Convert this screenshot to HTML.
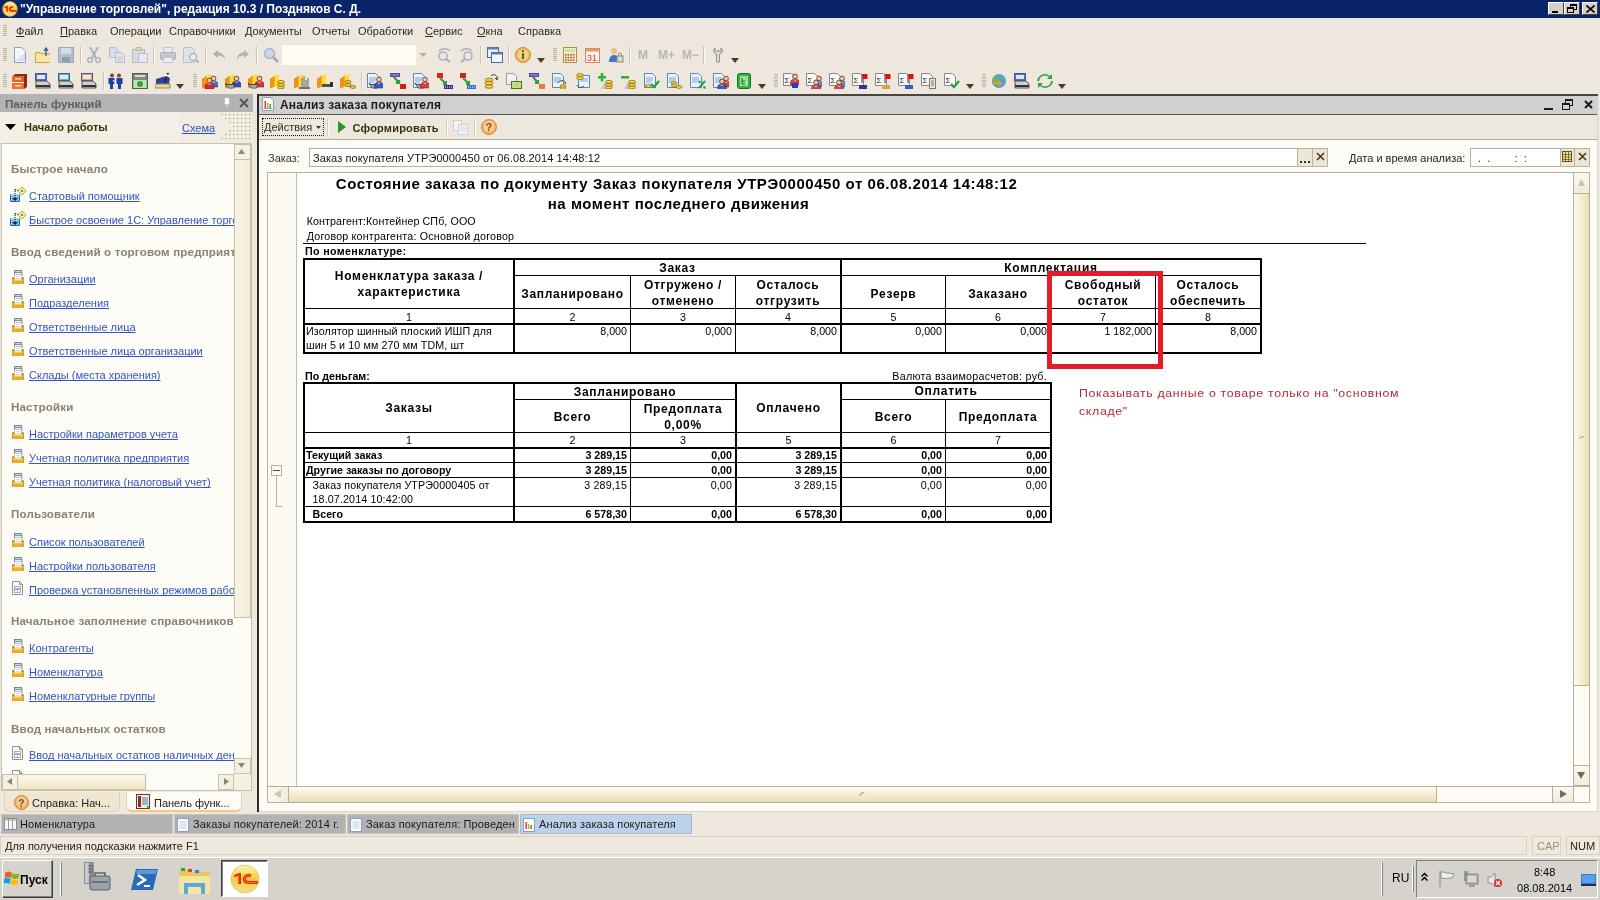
<!DOCTYPE html>
<html><head><meta charset="utf-8">
<style>
*{box-sizing:border-box;}
html,body{margin:0;padding:0;}
body{width:1600px;height:900px;position:relative;overflow:hidden;background:#eee7de;font-family:"Liberation Sans",sans-serif;font-size:11px;color:#000;}
.a{position:absolute;}
.t{position:absolute;white-space:nowrap;line-height:1;}
.grip{position:absolute;width:4px;background:repeating-linear-gradient(to bottom,#b9b29c 0 1px,transparent 1px 2px);}
.sep{position:absolute;width:1px;background:#d8d0bf;border-right:1px solid #fff;}
.ico{position:absolute;width:16px;height:16px;}
.lnk{color:#2646c8;text-decoration:underline;}
u,.t{text-decoration-skip-ink:none;}
.sec{color:#8a826f;font-weight:bold;}
</style></head>
<body><div id="wrap" style="position:absolute;left:0;top:0;width:1600px;height:900px;will-change:transform;">
<!-- TITLE BAR -->
<div class="a" style="left:0;top:0;width:1600px;height:18px;background:#0a246a;"></div>
<svg class="a" style="left:2px;top:1px" width="16" height="16" viewBox="0 0 30 30"><defs><linearGradient id="g1t" x1="0" y1="0" x2="0" y2="1"><stop offset="0" stop-color="#fdf2b0"/><stop offset="0.5" stop-color="#f5cf3a"/><stop offset="1" stop-color="#f6dc90"/></linearGradient></defs><circle cx="15" cy="15" r="14" fill="url(#g1t)" stroke="#c09030" stroke-width="1.2"/><path d="M4 11l5-2h2v11H8v-8l-4 1z" fill="#e8280a"/><path d="M21 12a4.2 3.6 0 1 0 -3 6.5H28" stroke="#e8280a" stroke-width="3.4" fill="none"/></svg>
<div class="t" style="left:20px;top:3px;color:#fff;font-weight:bold;font-size:12px;">"Управление торговлей", редакция 10.3 / Поздняков С. Д.</div>
<!-- title buttons -->
<div class="a" style="left:1548px;top:2px;width:16px;height:13px;background:#d4d0c8;border:1px solid;border-color:#fff #404040 #404040 #fff;"><div class="a" style="left:3px;top:8px;width:6px;height:2px;background:#000"></div></div>
<div class="a" style="left:1564px;top:2px;width:16px;height:13px;background:#d4d0c8;border:1px solid;border-color:#fff #404040 #404040 #fff;"><div class="a" style="left:5px;top:1px;width:7px;height:6px;border:1px solid #000;border-top-width:2px"></div><div class="a" style="left:2px;top:4px;width:7px;height:6px;border:1px solid #000;border-top-width:2px;background:#d4d0c8"></div></div>
<div class="a" style="left:1582px;top:2px;width:16px;height:13px;background:#d4d0c8;border:1px solid;border-color:#fff #404040 #404040 #fff;"><svg class="a" style="left:3px;top:2px" width="9" height="8"><path d="M0.5 0.5L8.5 7.5M8.5 0.5L0.5 7.5" stroke="#000" stroke-width="1.6"/></svg></div>

<!-- MENU BAR -->
<div class="grip" style="left:3px;top:25px;height:11px;"></div>
<div id="menu">
<div class="t" style="left:16px;top:26px;color:#2b2b1c;"><u>Ф</u>айл</div>
<div class="t" style="left:60px;top:26px;color:#2b2b1c;"><u>П</u>равка</div>
<div class="t" style="left:110px;top:26px;color:#2b2b1c;">Операции</div>
<div class="t" style="left:169px;top:26px;color:#2b2b1c;">Справочники</div>
<div class="t" style="left:245px;top:26px;color:#2b2b1c;">Документы</div>
<div class="t" style="left:312px;top:26px;color:#2b2b1c;">Отчеты</div>
<div class="t" style="left:358px;top:26px;color:#2b2b1c;">Обработки</div>
<div class="t" style="left:425px;top:26px;color:#2b2b1c;"><u>С</u>ервис</div>
<div class="t" style="left:477px;top:26px;color:#2b2b1c;"><u>О</u>кна</div>
<div class="t" style="left:518px;top:26px;color:#2b2b1c;">Справка</div>
</div>

<!-- TOOLBAR 1 -->
<div class="grip" style="left:3px;top:48px;height:13px;"></div><svg class="a" style="left:12px;top:47px;" width="16" height="16" viewBox="0 0 16 16"><path d="M2.5 0.5h7l4 4v11h-11z" fill="#f4f8fd" stroke="#8ea0b8"/><path d="M3 14h10V6z" fill="#d5e2f2"/></svg><svg class="a" style="left:35px;top:47px;" width="16" height="16" viewBox="0 0 16 16"><path d="M0.5 5.5h5l1 1h8v9h-14z" fill="#f6dc83" stroke="#c9a24a"/><path d="M1 8h14v7H1z" fill="#f8e7a6"/><path d="M11 2v7M9 4l2-3 2 3" stroke="#2d5a94" stroke-width="1.3" fill="none"/></svg><svg class="a" style="left:58px;top:47px;" width="16" height="16" viewBox="0 0 16 16"><rect x="0.5" y="0.5" width="15" height="15" fill="#b2bfcc" stroke="#9aa8b8"/><rect x="3" y="1" width="10" height="6" fill="#d6dde6"/><rect x="4" y="10" width="8" height="5" fill="#8e9cad"/></svg><div class="a" style="left:80px;top:46px;width:1px;height:18px;background:#cdc5b4;"></div><div class="a" style="left:81px;top:46px;width:1px;height:18px;background:#fbf9f5;"></div><svg class="a" style="left:86px;top:47px;" width="16" height="16" viewBox="0 0 16 16"><path d="M4 0l6 11M12 0L6 11" stroke="#a6b1bf" stroke-width="2"/><circle cx="4" cy="13" r="2.3" fill="none" stroke="#a6b1bf" stroke-width="1.5"/><circle cx="12" cy="13" r="2.3" fill="none" stroke="#a6b1bf" stroke-width="1.5"/></svg><svg class="a" style="left:109px;top:47px;" width="16" height="16" viewBox="0 0 16 16"><path d="M0.5 0.5h6l2 2v8h-8z" fill="#d8dee8" stroke="#b6c0cc"/><path d="M6.5 5.5h6l3 3v7h-9z" fill="#dfe5ee" stroke="#b6c0cc"/><path d="M8 10h6M8 12h6M8 14h6" stroke="#c0c9d6"/></svg><svg class="a" style="left:132px;top:47px;" width="16" height="16" viewBox="0 0 16 16"><rect x="0.5" y="2.5" width="12" height="13" fill="#d5dbe3" stroke="#b3bcc8"/><rect x="4" y="0.5" width="5" height="3" fill="#e6d9b8" stroke="#c4b690"/><path d="M6.5 6.5h9v9h-9z" fill="#e4e9f0" stroke="#b6c0cc"/></svg><div class="a" style="left:153px;top:46px;width:1px;height:18px;background:#cdc5b4;"></div><div class="a" style="left:154px;top:46px;width:1px;height:18px;background:#fbf9f5;"></div><svg class="a" style="left:160px;top:47px;" width="16" height="16" viewBox="0 0 16 16"><rect x="3.5" y="0.5" width="9" height="5" fill="#e5e8ec" stroke="#bfc5cc"/><rect x="0.5" y="5.5" width="15" height="7" rx="1" fill="#c4c8cd" stroke="#a9aeb5"/><rect x="3.5" y="10.5" width="9" height="5" fill="#eceef0" stroke="#bfc5cc"/></svg><svg class="a" style="left:183px;top:47px;" width="16" height="16" viewBox="0 0 16 16"><path d="M0.5 0.5h8l3 3v12h-11z" fill="#dde3eb" stroke="#b8c1cd"/><circle cx="10" cy="10" r="3.5" fill="#e8edf3" stroke="#a8b2be" stroke-width="1.3"/><path d="M12.5 12.5l3 3" stroke="#a8b2be" stroke-width="2"/></svg><div class="a" style="left:205px;top:46px;width:1px;height:18px;background:#cdc5b4;"></div><div class="a" style="left:206px;top:46px;width:1px;height:18px;background:#fbf9f5;"></div><svg class="a" style="left:212px;top:47px;" width="16" height="16" viewBox="0 0 16 16"><path d="M6 3L1 7l5 4V8.5c4 0 6 1.5 7 4.5c0-5-3-7.5-7-7.5z" fill="#a9b3a9"/></svg><svg class="a" style="left:234px;top:47px;" width="16" height="16" viewBox="0 0 16 16"><path d="M10 3l5 4-5 4V8.5c-4 0-6 1.5-7 4.5c0-5 3-7.5 7-7.5z" fill="#a9b7a9"/></svg><div class="a" style="left:256px;top:46px;width:1px;height:18px;background:#cdc5b4;"></div><div class="a" style="left:257px;top:46px;width:1px;height:18px;background:#fbf9f5;"></div><svg class="a" style="left:263px;top:47px;" width="16" height="16" viewBox="0 0 16 16"><circle cx="6.5" cy="6.5" r="5" fill="#c8d6ea" stroke="#a9b6c6" stroke-width="1.5"/><path d="M10 10l5 5" stroke="#a6a9ae" stroke-width="2.5"/></svg><div class="a" style="left:282px;top:45px;width:134px;height:20px;background:#fdfbf3;"></div><div class="a" style="left:416px;top:45px;width:15px;height:20px;background:#efe9dc;border:1px solid #f5e9c0;border-left:none"></div><svg class="a" style="left:419px;top:53px" width="8" height="5"><path d="M0 0h8L4 4z" fill="#b8b0a0"/></svg><svg class="a" style="left:436px;top:47px;" width="16" height="16" viewBox="0 0 16 16"><g><circle cx="7" cy="9" r="4" fill="none" stroke="#a9b3bf" stroke-width="1.6"/><path d="M10 12l4 3" stroke="#a9aeb5" stroke-width="2"/><path d="M3 4c3-3 8-3 11 0" stroke="#a9b3bf" stroke-width="1.5" fill="none"/></g></svg><svg class="a" style="left:459px;top:47px;" width="16" height="16" viewBox="0 0 16 16"><g transform="translate(16,0) scale(-1,1)"><circle cx="7" cy="9" r="4" fill="none" stroke="#a9b3bf" stroke-width="1.6"/><path d="M10 12l4 3" stroke="#a9aeb5" stroke-width="2"/><path d="M3 4c3-3 8-3 11 0" stroke="#a9b3bf" stroke-width="1.5" fill="none"/></g></svg><div class="a" style="left:480px;top:46px;width:1px;height:18px;background:#cdc5b4;"></div><div class="a" style="left:481px;top:46px;width:1px;height:18px;background:#fbf9f5;"></div><svg class="a" style="left:487px;top:47px;" width="16" height="16" viewBox="0 0 16 16"><rect x="0.5" y="0.5" width="11" height="10" fill="#e8eef6" stroke="#4a6b96"/><rect x="0.5" y="0.5" width="11" height="2" fill="#5b7fb0"/><rect x="4.5" y="5.5" width="11" height="10" fill="#f2f5fa" stroke="#4a6b96"/><rect x="4.5" y="5.5" width="11" height="2" fill="#5b7fb0"/></svg><div class="a" style="left:508px;top:46px;width:1px;height:18px;background:#cdc5b4;"></div><div class="a" style="left:509px;top:46px;width:1px;height:18px;background:#fbf9f5;"></div><svg class="a" style="left:515px;top:47px;" width="16" height="16" viewBox="0 0 16 16"><circle cx="8" cy="8" r="7.5" fill="#f0b85a" stroke="#c98a30"/><circle cx="8" cy="8" r="5.5" fill="#f6cf84"/><rect x="7" y="6" width="2" height="6" fill="#3c7a1e"/><rect x="7" y="3" width="2" height="2" fill="#3c7a1e"/></svg><svg class="a" style="left:537px;top:58px;" width="8" height="5" viewBox="0 0 8 5"><path d="M0 0h8L4 5z" fill="#4a3e1c"/></svg><div class="grip" style="left:553px;top:48px;height:13px;"></div><svg class="a" style="left:562px;top:47px;" width="16" height="16" viewBox="0 0 16 16"><rect x="1.5" y="0.5" width="13" height="15" fill="#f5e9c8" stroke="#b58d3c"/><rect x="3" y="2" width="10" height="3" fill="#cde3a9"/><rect x="3.0" y="7.0" width="1.6" height="1.6" fill="#a06020"/><rect x="5.6" y="7.0" width="1.6" height="1.6" fill="#a06020"/><rect x="8.2" y="7.0" width="1.6" height="1.6" fill="#a06020"/><rect x="10.8" y="7.0" width="1.6" height="1.6" fill="#a06020"/><rect x="3.0" y="9.7" width="1.6" height="1.6" fill="#a06020"/><rect x="5.6" y="9.7" width="1.6" height="1.6" fill="#a06020"/><rect x="8.2" y="9.7" width="1.6" height="1.6" fill="#a06020"/><rect x="10.8" y="9.7" width="1.6" height="1.6" fill="#a06020"/><rect x="3.0" y="12.4" width="1.6" height="1.6" fill="#a06020"/><rect x="5.6" y="12.4" width="1.6" height="1.6" fill="#a06020"/><rect x="8.2" y="12.4" width="1.6" height="1.6" fill="#a06020"/><rect x="10.8" y="12.4" width="1.6" height="1.6" fill="#a06020"/></svg><svg class="a" style="left:585px;top:47px;" width="16" height="16" viewBox="0 0 16 16"><rect x="0.5" y="1.5" width="14" height="14" fill="#fbf3e6" stroke="#c78a5a"/><rect x="0.5" y="1.5" width="14" height="3" fill="#e39a6a"/><text x="2" y="14" font-size="9" font-family="Liberation Sans" fill="#d04020">31</text></svg><svg class="a" style="left:608px;top:47px;" width="16" height="16" viewBox="0 0 16 16"><circle cx="6" cy="4" r="3" fill="#f2b98a"/><path d="M1 15c0-5 2-7 5-7s5 2 5 7z" fill="#3f78c8"/><rect x="9" y="9" width="6" height="6" fill="#e0d8c0" stroke="#8a8a80"/><path d="M10.5 9V7.5a1.5 1.5 0 013 0V9" stroke="#8a8a80" fill="none"/></svg><div class="a" style="left:629px;top:46px;width:1px;height:18px;background:#cdc5b4;"></div><div class="a" style="left:630px;top:46px;width:1px;height:18px;background:#fbf9f5;"></div><div class="t" style="left:638px;top:49px;font-weight:bold;font-size:12px;color:#b9b4ac">M</div><div class="t" style="left:658px;top:49px;font-weight:bold;font-size:12px;color:#b9b4ac">M+</div><div class="t" style="left:682px;top:49px;font-weight:bold;font-size:12px;color:#b9b4ac">M−</div><div class="a" style="left:703px;top:46px;width:1px;height:18px;background:#cdc5b4;"></div><div class="a" style="left:704px;top:46px;width:1px;height:18px;background:#fbf9f5;"></div><svg class="a" style="left:712px;top:47px;" width="12" height="16" viewBox="0 0 12 16"><path d="M3 1a3.5 3.5 0 001.5 6.2V15h3V7.2A3.5 3.5 0 009 1v3H3z" fill="#dcdcdc" stroke="#8f8f8f"/></svg><svg class="a" style="left:731px;top:58px;" width="8" height="5" viewBox="0 0 8 5"><path d="M0 0h8L4 5z" fill="#4a3e1c"/></svg>
<!-- TOOLBAR 2 -->
<div class="grip" style="left:3px;top:74px;height:13px;"></div><svg class="a" style="left:12px;top:73px;" width="16" height="16" viewBox="0 0 16 16"><path d="M3 1h12v13l-3 2H0V4z" fill="#8b2a1c"/><rect x="0" y="3" width="12" height="6" fill="#f06020"/><rect x="0" y="10" width="12" height="6" fill="#f07030"/><rect x="3" y="5" width="6" height="1.5" fill="#ffe0b0"/><rect x="3" y="12" width="6" height="1.5" fill="#ffe0b0"/><rect x="0" y="9" width="12" height="1" fill="#fff"/></svg><svg class="a" style="left:35px;top:73px;" width="16" height="16" viewBox="0 0 16 16"><rect x="0.5" y="0.5" width="11" height="7" fill="#5070c8" stroke="#4a5a88"/><rect x="2" y="2" width="8" height="4" fill="#dfe8f6"/><path d="M1 8h11l3 3v4H1z" fill="#cfcfcf" stroke="#555"/><rect x="1" y="12" width="14" height="2" fill="#333"/></svg><svg class="a" style="left:58px;top:73px;" width="16" height="16" viewBox="0 0 16 16"><rect x="0.5" y="0.5" width="11" height="7" fill="#58b8c8" stroke="#4a5a88"/><rect x="2" y="2" width="8" height="4" fill="#dfe8f6"/><path d="M1 8h11l3 3v4H1z" fill="#cfcfcf" stroke="#555"/><rect x="1" y="12" width="14" height="2" fill="#333"/></svg><svg class="a" style="left:81px;top:73px;" width="16" height="16" viewBox="0 0 16 16"><rect x="0.5" y="0.5" width="11" height="7" fill="#f0a050" stroke="#4a5a88"/><rect x="2" y="2" width="8" height="4" fill="#dfe8f6"/><path d="M1 8h11l3 3v4H1z" fill="#cfcfcf" stroke="#555"/><rect x="1" y="12" width="14" height="2" fill="#333"/></svg><div class="a" style="left:103px;top:72px;width:1px;height:18px;background:#cdc5b4;"></div><div class="a" style="left:104px;top:72px;width:1px;height:18px;background:#fbf9f5;"></div><svg class="a" style="left:108px;top:73px;" width="16" height="16" viewBox="0 0 16 16"><circle cx="4" cy="2.5" r="2" fill="#7a4a2a"/><circle cx="11" cy="2.5" r="2" fill="#7a4a2a"/><path d="M0.5 5h6v6h-1.5v5H2v-5H0.5z" fill="#1e3fa8"/><path d="M8.5 5h6v6h-1.5v5H10v-5H8.5z" fill="#1e3fa8"/><path d="M5 7l3 4" stroke="#fff"/></svg><svg class="a" style="left:132px;top:73px;" width="16" height="16" viewBox="0 0 16 16"><rect x="0.5" y="0.5" width="15" height="15" fill="#7d8a82" stroke="#4d5a52"/><rect x="1.5" y="7" width="13" height="8" fill="#b9e6b3"/><circle cx="8" cy="11" r="3" fill="#3c9a3c"/><rect x="3" y="2" width="10" height="2" fill="#d8dce0"/></svg><svg class="a" style="left:155px;top:73px;" width="16" height="16" viewBox="0 0 16 16"><path d="M1 6l10-3 4 2-1 6H1z" fill="#3040a0"/><path d="M0 11h15v4H0z" fill="#e6d896" stroke="#9a8a40"/><path d="M10 2l4-2M12 1l-2 8" stroke="#202020" stroke-width="1.4"/><circle cx="11" cy="2" r="1.5" fill="#fff"/></svg><svg class="a" style="left:176px;top:84px;" width="8" height="5" viewBox="0 0 8 5"><path d="M0 0h8L4 5z" fill="#4a3e1c"/></svg><div class="grip" style="left:193px;top:74px;height:13px;"></div><svg class="a" style="left:202px;top:73px;" width="16" height="16" viewBox="0 0 16 16"><path d="M0 6L5 2.5V13.5L0 15.5z" fill="#f08a10"/><path d="M4.5 3.5L9 1V12.5L4.5 14z" fill="#ffd820"/><path d="M1 7.5v7M3 6v7.5" stroke="#ffb040" stroke-width="0.8" stroke-dasharray="1 1"/><path d="M6 4v9M8 3v9" stroke="#fff080" stroke-width="0.8" stroke-dasharray="1 1"/><path d="M7.0 14v-2.5c0-2.5 2-3.5 4.5-3.5s4.5 1 4.5 3.5V14z" fill="#4070d0" stroke="#5a1010" stroke-width="0.5"/><path d="M10.0 8l1.5 2 1.5-2" stroke="#fff" stroke-width="0.6" fill="none"/><circle cx="11.5" cy="5.5" r="2.4" fill="#f8c0a0" stroke="#3a1a10" stroke-width="0.7"/><path d="M3.0 16v-2.5c0-2.5 2-3.5 4.5-3.5s4.5 1 4.5 3.5V16z" fill="#e02828" stroke="#5a1010" stroke-width="0.5"/><path d="M6.0 10l1.5 2 1.5-2" stroke="#fff" stroke-width="0.6" fill="none"/><circle cx="7.5" cy="7.5" r="2.4" fill="#f8c0a0" stroke="#3a1a10" stroke-width="0.7"/></svg><svg class="a" style="left:225px;top:73px;" width="16" height="16" viewBox="0 0 16 16"><path d="M0 6L5 2.5V13.5L0 15.5z" fill="#f08a10"/><path d="M4.5 3.5L9 1V12.5L4.5 14z" fill="#ffd820"/><path d="M1 7.5v7M3 6v7.5" stroke="#ffb040" stroke-width="0.8" stroke-dasharray="1 1"/><path d="M6 4v9M8 3v9" stroke="#fff080" stroke-width="0.8" stroke-dasharray="1 1"/><path d="M7.0 14v-2.5c0-2.5 2-3.5 4.5-3.5s4.5 1 4.5 3.5V14z" fill="#3050c0" stroke="#5a1010" stroke-width="0.5"/><path d="M10.0 8l1.5 2 1.5-2" stroke="#fff" stroke-width="0.6" fill="none"/><circle cx="11.5" cy="5.5" r="2.4" fill="#f8c0a0" stroke="#3a1a10" stroke-width="0.7"/><path d="M0 10.5l2 1h8l-1.5 3.5h-5z" fill="#fff" stroke="#303030" stroke-width="0.9"/><path d="M4 12v2.5M6 12v2.5M8 12v2.5M2 13h8" stroke="#505050" stroke-width="0.6"/></svg><svg class="a" style="left:248px;top:73px;" width="16" height="16" viewBox="0 0 16 16"><path d="M0 6L5 2.5V13.5L0 15.5z" fill="#f08a10"/><path d="M4.5 3.5L9 1V12.5L4.5 14z" fill="#ffd820"/><path d="M1 7.5v7M3 6v7.5" stroke="#ffb040" stroke-width="0.8" stroke-dasharray="1 1"/><path d="M6 4v9M8 3v9" stroke="#fff080" stroke-width="0.8" stroke-dasharray="1 1"/><path d="M7.0 14v-2.5c0-2.5 2-3.5 4.5-3.5s4.5 1 4.5 3.5V14z" fill="#e03030" stroke="#5a1010" stroke-width="0.5"/><path d="M10.0 8l1.5 2 1.5-2" stroke="#fff" stroke-width="0.6" fill="none"/><circle cx="11.5" cy="5.5" r="2.4" fill="#f8c0a0" stroke="#3a1a10" stroke-width="0.7"/><path d="M0 10.5l2 1h8l-1.5 3.5h-5z" fill="#fff" stroke="#303030" stroke-width="0.9"/><path d="M4 12v2.5M6 12v2.5M8 12v2.5M2 13h8" stroke="#505050" stroke-width="0.6"/></svg><svg class="a" style="left:270px;top:73px;" width="16" height="16" viewBox="0 0 16 16"><path d="M0 6L5 2.5V13.5L0 15.5z" fill="#f08a10"/><path d="M4.5 3.5L9 1V12.5L4.5 14z" fill="#ffd820"/><path d="M1 7.5v7M3 6v7.5" stroke="#ffb040" stroke-width="0.8" stroke-dasharray="1 1"/><path d="M6 4v9M8 3v9" stroke="#fff080" stroke-width="0.8" stroke-dasharray="1 1"/><ellipse cx="11" cy="9" rx="3.5" ry="1.6" fill="#f6d23a" stroke="#7a5a00" stroke-width="0.7"/><ellipse cx="11" cy="12" rx="3.5" ry="1.6" fill="#f6d23a" stroke="#7a5a00" stroke-width="0.7"/><ellipse cx="11" cy="14.5" rx="3.5" ry="1.4" fill="#f6d23a" stroke="#7a5a00" stroke-width="0.7"/></svg><svg class="a" style="left:294px;top:73px;" width="16" height="16" viewBox="0 0 16 16"><path d="M0 6L5 2.5V13.5L0 15.5z" fill="#f08a10"/><path d="M4.5 3.5L9 1V12.5L4.5 14z" fill="#ffd820"/><path d="M1 7.5v7M3 6v7.5" stroke="#ffb040" stroke-width="0.8" stroke-dasharray="1 1"/><path d="M6 4v9M8 3v9" stroke="#fff080" stroke-width="0.8" stroke-dasharray="1 1"/><path d="M8 5v10M10 3v12M12 7v8M14 5v10" stroke="#8a8a8a" stroke-width="1.4"/><rect x="5" y="14" width="11" height="2" fill="#707070"/></svg><svg class="a" style="left:317px;top:73px;" width="16" height="16" viewBox="0 0 16 16"><path d="M0 6L5 2.5V13.5L0 15.5z" fill="#f08a10"/><path d="M4.5 3.5L9 1V12.5L4.5 14z" fill="#ffd820"/><path d="M1 7.5v7M3 6v7.5" stroke="#ffb040" stroke-width="0.8" stroke-dasharray="1 1"/><path d="M6 4v9M8 3v9" stroke="#fff080" stroke-width="0.8" stroke-dasharray="1 1"/><rect x="5" y="11" width="9" height="3" fill="#505050"/><rect x="13" y="9" width="3" height="5" fill="#303030"/></svg><svg class="a" style="left:340px;top:73px;" width="16" height="16" viewBox="0 0 16 16"><path d="M0 6L5 2.5V13.5L0 15.5z" fill="#f08a10"/><path d="M4.5 3.5L9 1V12.5L4.5 14z" fill="#ffd820"/><path d="M1 7.5v7M3 6v7.5" stroke="#ffb040" stroke-width="0.8" stroke-dasharray="1 1"/><path d="M6 4v9M8 3v9" stroke="#fff080" stroke-width="0.8" stroke-dasharray="1 1"/><ellipse cx="8" cy="9" rx="3" ry="1.5" fill="#f6d23a" stroke="#7a5a00" stroke-width="0.7"/><ellipse cx="8" cy="12" rx="3" ry="1.5" fill="#f6d23a" stroke="#7a5a00" stroke-width="0.7"/><ellipse cx="13" cy="14" rx="3" ry="1.4" fill="#f6d23a" stroke="#7a5a00" stroke-width="0.7"/></svg><div class="a" style="left:361px;top:72px;width:1px;height:18px;background:#cdc5b4;"></div><div class="a" style="left:362px;top:72px;width:1px;height:18px;background:#fbf9f5;"></div><svg class="a" style="left:367px;top:73px;" width="16" height="16" viewBox="0 0 16 16"><path d="M0.5 0.5h8l3 3v11h-11z" fill="#eaf2fb" stroke="#5b86c0"/><path d="M2 5h7M2 7h7M2 9h5" stroke="#7aa6d8"/><path d="M2 10.5l2 1h8l-1.5 3.5h-5z" fill="#fff" stroke="#303030" stroke-width="0.9"/><path d="M6 12v2.5M8 12v2.5M10 12v2.5M4 13h8" stroke="#505050" stroke-width="0.6"/><path d="M7.5 15v-2.5c0-2.5 2-3.5 4.5-3.5s4.5 1 4.5 3.5V15z" fill="#2f5fc8" stroke="#5a1010" stroke-width="0.5"/><path d="M10.5 9l1.5 2 1.5-2" stroke="#fff" stroke-width="0.6" fill="none"/><circle cx="12" cy="6.5" r="2.4" fill="#f8c0a0" stroke="#3a1a10" stroke-width="0.7"/></svg><svg class="a" style="left:390px;top:73px;" width="16" height="16" viewBox="0 0 16 16"><rect x="0" y="0" width="10" height="4" fill="#6040b0"/><path d="M1.5 2h7" stroke="#fff" stroke-dasharray="1 1"/><path d="M4 4l5 6M6 10h3V7" stroke="#30a030" stroke-width="2.2" fill="none"/><rect x="10" y="11" width="6" height="5" fill="#e01818"/></svg><svg class="a" style="left:413px;top:73px;" width="16" height="16" viewBox="0 0 16 16"><path d="M0.5 0.5h8l3 3v11h-11z" fill="#eaf2fb" stroke="#5b86c0"/><path d="M2 5h7M2 7h7M2 9h5" stroke="#7aa6d8"/><path d="M2 10.5l2 1h8l-1.5 3.5h-5z" fill="#fff" stroke="#303030" stroke-width="0.9"/><path d="M6 12v2.5M8 12v2.5M10 12v2.5M4 13h8" stroke="#505050" stroke-width="0.6"/><path d="M7.5 15v-2.5c0-2.5 2-3.5 4.5-3.5s4.5 1 4.5 3.5V15z" fill="#e03a3a" stroke="#5a1010" stroke-width="0.5"/><path d="M10.5 9l1.5 2 1.5-2" stroke="#fff" stroke-width="0.6" fill="none"/><circle cx="12" cy="6.5" r="2.4" fill="#f8c0a0" stroke="#3a1a10" stroke-width="0.7"/></svg><svg class="a" style="left:437px;top:73px;" width="16" height="16" viewBox="0 0 16 16"><rect x="0" y="0" width="6" height="5" fill="#e02020"/><path d="M3 5l6 6M6 11h3V8" stroke="#30a030" stroke-width="2" fill="none"/><rect x="7" y="12" width="9" height="4" fill="#3030a0"/><path d="M8 14h7" stroke="#fff" stroke-dasharray="1 1"/></svg><svg class="a" style="left:460px;top:73px;" width="16" height="16" viewBox="0 0 16 16"><rect x="0" y="0" width="6" height="5" fill="#e02020"/><path d="M3 5l6 6M6 11h3V8" stroke="#30a030" stroke-width="2" fill="none"/><rect x="7" y="12" width="9" height="4" fill="#3070d0"/><path d="M8 14h7" stroke="#fff" stroke-dasharray="1 1"/></svg><svg class="a" style="left:483px;top:73px;" width="16" height="16" viewBox="0 0 16 16"><ellipse cx="6" cy="7" rx="4" ry="1.8" fill="#f6d23a" stroke="#7a5a00" stroke-width="0.7"/><ellipse cx="6" cy="10" rx="4" ry="1.8" fill="#f6d23a" stroke="#7a5a00" stroke-width="0.7"/><ellipse cx="6" cy="13.5" rx="4" ry="1.8" fill="#f6d23a" stroke="#7a5a00" stroke-width="0.7"/><path d="M8 3c3-3 6-1 6 3M12 5l2 2 1-3" stroke="#404040" fill="none"/></svg><svg class="a" style="left:506px;top:73px;" width="16" height="16" viewBox="0 0 16 16"><path d="M0.5 0.5h7l3 3v8h-10z" fill="#f4f4f4" stroke="#999"/><rect x="5.5" y="8.5" width="10" height="7" fill="#b8e0a0" stroke="#3a7a20"/><ellipse cx="10.5" cy="12" rx="2.5" ry="2" fill="#e6d040"/></svg><svg class="a" style="left:529px;top:73px;" width="16" height="16" viewBox="0 0 16 16"><rect x="0" y="0" width="10" height="4" fill="#6040b0"/><path d="M1.5 2h7" stroke="#fff" stroke-dasharray="1 1"/><path d="M4 4l5 6M6 10h3V7" stroke="#30a030" stroke-width="2.2" fill="none"/><rect x="10" y="11" width="6" height="5" fill="#e08040"/></svg><svg class="a" style="left:552px;top:73px;" width="16" height="16" viewBox="0 0 16 16"><path d="M0.5 0.5h8l3 3v11h-11z" fill="#eaf2fb" stroke="#5b86c0"/><path d="M2 5h7M2 7h7M2 9h5" stroke="#7aa6d8"/><path d="M6 10c2-3 6-3 8 0l-1.5 1" stroke="#404040" fill="none"/><ellipse cx="11" cy="13" rx="3" ry="1.4" fill="#f6d23a" stroke="#7a5a00" stroke-width="0.6"/><ellipse cx="11" cy="15" rx="3" ry="1.2" fill="#f6d23a" stroke="#7a5a00" stroke-width="0.6"/></svg><svg class="a" style="left:575px;top:73px;" width="16" height="16" viewBox="0 0 16 16"><path d="M3.5 2.5h11v12h-11z" fill="#eaf2fb" stroke="#5b86c0"/><path d="M5 6h8M5 8h8" stroke="#7aa6d8"/><ellipse cx="5" cy="2" rx="3.5" ry="1.5" fill="#f6d23a" stroke="#7a5a00" stroke-width="0.6"/><ellipse cx="5" cy="5" rx="3.5" ry="1.5" fill="#f6d23a" stroke="#7a5a00" stroke-width="0.6"/><path d="M2 12c1 3 5 3 7 1" stroke="#404040" fill="none"/></svg><svg class="a" style="left:598px;top:73px;" width="16" height="16" viewBox="0 0 16 16"><rect x="0" y="3" width="8" height="2.5" fill="#30b030"/><rect x="2.75" y="0" width="2.5" height="8.5" fill="#30b030"/><path d="M3 16l3-6h8v6z" fill="#c8c8c8"/><ellipse cx="11" cy="9" rx="3.5" ry="1.6" fill="#f6d23a" stroke="#7a5a00" stroke-width="0.7"/><ellipse cx="11" cy="12" rx="3.5" ry="1.6" fill="#f6d23a" stroke="#7a5a00" stroke-width="0.7"/><ellipse cx="11" cy="14.5" rx="3.5" ry="1.4" fill="#f6d23a" stroke="#7a5a00" stroke-width="0.7"/></svg><svg class="a" style="left:621px;top:73px;" width="16" height="16" viewBox="0 0 16 16"><rect x="0" y="3" width="8" height="2.5" fill="#30b030"/><path d="M3 16l3-6h8v6z" fill="#c8c8c8"/><ellipse cx="11" cy="9" rx="3.5" ry="1.6" fill="#f6d23a" stroke="#7a5a00" stroke-width="0.7"/><ellipse cx="11" cy="12" rx="3.5" ry="1.6" fill="#f6d23a" stroke="#7a5a00" stroke-width="0.7"/><ellipse cx="11" cy="14.5" rx="3.5" ry="1.4" fill="#f6d23a" stroke="#7a5a00" stroke-width="0.7"/></svg><svg class="a" style="left:644px;top:73px;" width="16" height="16" viewBox="0 0 16 16"><path d="M0.5 0.5h8l3 3v11h-11z" fill="#eaf2fb" stroke="#5b86c0"/><path d="M2 5h7M2 7h7M2 9h5" stroke="#7aa6d8"/><path d="M7 11l3 3 5-6" stroke="#20a040" stroke-width="2.2" fill="none"/><ellipse cx="4" cy="13" rx="3" ry="1.4" fill="#f6d23a" stroke="#7a5a00" stroke-width="0.6"/></svg><svg class="a" style="left:667px;top:73px;" width="16" height="16" viewBox="0 0 16 16"><path d="M0.5 0.5h8l3 3v11h-11z" fill="#eaf2fb" stroke="#5b86c0"/><path d="M2 5h7M2 7h7M2 9h5" stroke="#7aa6d8"/><ellipse cx="7" cy="10" rx="3" ry="1.4" fill="#f6d23a" stroke="#7a5a00" stroke-width="0.6"/><ellipse cx="7" cy="12.5" rx="3" ry="1.4" fill="#f6d23a" stroke="#7a5a00" stroke-width="0.6"/><ellipse cx="12" cy="14" rx="3" ry="1.4" fill="#f6d23a" stroke="#7a5a00" stroke-width="0.6"/></svg><svg class="a" style="left:690px;top:73px;" width="16" height="16" viewBox="0 0 16 16"><path d="M0.5 0.5h8l3 3v11h-11z" fill="#eaf2fb" stroke="#5b86c0"/><path d="M2 5h7M2 7h7M2 9h5" stroke="#7aa6d8"/><path d="M9 15l6-7" stroke="#20a040" stroke-width="2"/><circle cx="9.5" cy="9" r="1.3" fill="#20a040"/><circle cx="14.5" cy="14.5" r="1.3" fill="#20a040"/></svg><svg class="a" style="left:713px;top:73px;" width="16" height="16" viewBox="0 0 16 16"><path d="M0.5 0.5h8l3 3v11h-11z" fill="#eaf2fb" stroke="#5b86c0"/><path d="M2 5h7M2 7h7M2 9h5" stroke="#7aa6d8"/><path d="M8.5 14v-2.5c0-2.5 2-3.5 4.5-3.5s4.5 1 4.5 3.5V14z" fill="#e03a3a" stroke="#5a1010" stroke-width="0.5"/><path d="M11.5 8l1.5 2 1.5-2" stroke="#fff" stroke-width="0.6" fill="none"/><circle cx="13" cy="5.5" r="2.4" fill="#f8c0a0" stroke="#3a1a10" stroke-width="0.7"/><path d="M4.5 17v-2.5c0-2.5 2-3.5 4.5-3.5s4.5 1 4.5 3.5V17z" fill="#2f5fc8" stroke="#5a1010" stroke-width="0.5"/><path d="M7.5 11l1.5 2 1.5-2" stroke="#fff" stroke-width="0.6" fill="none"/><circle cx="9" cy="8.5" r="2.4" fill="#f8c0a0" stroke="#3a1a10" stroke-width="0.7"/></svg><svg class="a" style="left:736px;top:73px;" width="16" height="16" viewBox="0 0 16 16"><rect x="1.5" y="0.5" width="13" height="15" rx="2" fill="#38b048" stroke="#1a6a20"/><rect x="4" y="3" width="8" height="10" fill="#9ade90"/><path d="M6 5v6h3M6 8h3" stroke="#1a6a20" fill="none"/></svg><svg class="a" style="left:758px;top:84px;" width="8" height="5" viewBox="0 0 8 5"><path d="M0 0h8L4 5z" fill="#4a3e1c"/></svg><div class="grip" style="left:774px;top:74px;height:13px;"></div><svg class="a" style="left:783px;top:73px;" width="16" height="16" viewBox="0 0 16 16"><path d="M0.5 0.5h8l3 3v9h-11z" fill="#f8f8f8" stroke="#888"/><text x="1.5" y="10" font-size="8" font-family="Liberation Sans" fill="#222">Σ</text><path d="M7.5 12v-2.5c0-2.5 2-3.5 4.5-3.5s4.5 1 4.5 3.5V12z" fill="#e03a3a" stroke="#5a1010" stroke-width="0.5"/><path d="M10.5 6l1.5 2 1.5-2" stroke="#fff" stroke-width="0.6" fill="none"/><circle cx="12" cy="3.5" r="2.4" fill="#f8c0a0" stroke="#3a1a10" stroke-width="0.7"/><rect x="9" y="10" width="6" height="5" fill="#2040c0"/></svg><svg class="a" style="left:806px;top:73px;" width="16" height="16" viewBox="0 0 16 16"><path d="M0.5 0.5h8l3 3v9h-11z" fill="#f8f8f8" stroke="#888"/><text x="1.5" y="10" font-size="8" font-family="Liberation Sans" fill="#222">Σ</text><path d="M8.5 14v-2.5c0-2.5 2-3.5 4.5-3.5s4.5 1 4.5 3.5V14z" fill="#5080d0" stroke="#5a1010" stroke-width="0.5"/><path d="M11.5 8l1.5 2 1.5-2" stroke="#fff" stroke-width="0.6" fill="none"/><circle cx="13" cy="5.5" r="2.4" fill="#f8c0a0" stroke="#3a1a10" stroke-width="0.7"/><path d="M5.5 18v-2.5c0-2.5 2-3.5 4.5-3.5s4.5 1 4.5 3.5V18z" fill="#e04040" stroke="#5a1010" stroke-width="0.5"/><path d="M8.5 12l1.5 2 1.5-2" stroke="#fff" stroke-width="0.6" fill="none"/><circle cx="10" cy="9.5" r="2.4" fill="#f8c0a0" stroke="#3a1a10" stroke-width="0.7"/></svg><svg class="a" style="left:829px;top:73px;" width="16" height="16" viewBox="0 0 16 16"><path d="M0.5 0.5h8l3 3v9h-11z" fill="#f8f8f8" stroke="#888"/><text x="1.5" y="10" font-size="8" font-family="Liberation Sans" fill="#222">Σ</text><path d="M8.5 14v-2.5c0-2.5 2-3.5 4.5-3.5s4.5 1 4.5 3.5V14z" fill="#5080d0" stroke="#5a1010" stroke-width="0.5"/><path d="M11.5 8l1.5 2 1.5-2" stroke="#fff" stroke-width="0.6" fill="none"/><circle cx="13" cy="5.5" r="2.4" fill="#f8c0a0" stroke="#3a1a10" stroke-width="0.7"/><path d="M5.5 18v-2.5c0-2.5 2-3.5 4.5-3.5s4.5 1 4.5 3.5V18z" fill="#e04040" stroke="#5a1010" stroke-width="0.5"/><path d="M8.5 12l1.5 2 1.5-2" stroke="#fff" stroke-width="0.6" fill="none"/><circle cx="10" cy="9.5" r="2.4" fill="#f8c0a0" stroke="#3a1a10" stroke-width="0.7"/></svg><svg class="a" style="left:852px;top:73px;" width="16" height="16" viewBox="0 0 16 16"><path d="M0.5 0.5h8l3 3v9h-11z" fill="#f8f8f8" stroke="#888"/><text x="1.5" y="10" font-size="8" font-family="Liberation Sans" fill="#222">Σ</text><path d="M10 1v9" stroke="#333"/><rect x="10.5" y="1" width="5" height="5" fill="#e01010"/><rect x="7" y="12" width="8" height="4" fill="#3030a0"/></svg><svg class="a" style="left:875px;top:73px;" width="16" height="16" viewBox="0 0 16 16"><path d="M0.5 0.5h8l3 3v9h-11z" fill="#f8f8f8" stroke="#888"/><text x="1.5" y="10" font-size="8" font-family="Liberation Sans" fill="#222">Σ</text><path d="M10 1v9" stroke="#333"/><rect x="10.5" y="1" width="5" height="5" fill="#e01010"/><rect x="7" y="12" width="8" height="4" fill="#e0a040"/></svg><svg class="a" style="left:898px;top:73px;" width="16" height="16" viewBox="0 0 16 16"><path d="M0.5 0.5h8l3 3v9h-11z" fill="#f8f8f8" stroke="#888"/><text x="1.5" y="10" font-size="8" font-family="Liberation Sans" fill="#222">Σ</text><path d="M10 1v9" stroke="#333"/><rect x="10.5" y="1" width="5" height="5" fill="#e01010"/><rect x="7" y="12" width="8" height="4" fill="#3060c0"/></svg><svg class="a" style="left:921px;top:73px;" width="16" height="16" viewBox="0 0 16 16"><path d="M0.5 0.5h8l3 3v9h-11z" fill="#f8f8f8" stroke="#888"/><text x="1.5" y="10" font-size="8" font-family="Liberation Sans" fill="#222">Σ</text><rect x="8.5" y="5.5" width="6" height="10" fill="#e8e8e8" stroke="#777"/><path d="M10 8h3M10 10h3M10 12h3" stroke="#777"/></svg><svg class="a" style="left:944px;top:73px;" width="16" height="16" viewBox="0 0 16 16"><path d="M0.5 0.5h8l3 3v9h-11z" fill="#f8f8f8" stroke="#888"/><text x="1.5" y="10" font-size="8" font-family="Liberation Sans" fill="#222">Σ</text><path d="M7 11l3 3 5-6" stroke="#20a040" stroke-width="2.2" fill="none"/></svg><svg class="a" style="left:966px;top:84px;" width="8" height="5" viewBox="0 0 8 5"><path d="M0 0h8L4 5z" fill="#4a3e1c"/></svg><div class="grip" style="left:982px;top:74px;height:13px;"></div><svg class="a" style="left:991px;top:73px;" width="16" height="16" viewBox="0 0 16 16"><circle cx="8" cy="8" r="7" fill="#5aa0c8"/><path d="M3 3c4 0 6 3 5 6-3 0-5 2-5 4" fill="#6ab860"/><path d="M1 10h8l-2-2M9 10l-2 2" stroke="#e0a020" stroke-width="2.5" fill="none"/></svg><svg class="a" style="left:1014px;top:73px;" width="16" height="16" viewBox="0 0 16 16"><rect x="0.5" y="0.5" width="11" height="7" fill="#5070c8" stroke="#4a5a88"/><rect x="2" y="2" width="8" height="4" fill="#dfe8f6"/><path d="M1 8h11l3 3v4H1z" fill="#cfcfcf" stroke="#555"/><rect x="1" y="12" width="14" height="2" fill="#333"/></svg><svg class="a" style="left:1037px;top:73px;" width="16" height="16" viewBox="0 0 16 16"><path d="M2 8a6 6 0 0110-4l-2 2h5V1l-2 2A8 8 0 000 8z" fill="#30a040"/><path d="M14 8a6 6 0 01-10 4l2-2H1v5l2-2a8 8 0 0013-5z" fill="#30a040"/></svg><svg class="a" style="left:1058px;top:84px;" width="8" height="5" viewBox="0 0 8 5"><path d="M0 0h8L4 5z" fill="#4a3e1c"/></svg>

<!-- LEFT PANEL -->
<div class="a" style="left:0px;top:94px;width:253px;height:18px;background:#b4b2b4;"></div><div class="t" style="left:5px;top:97.78px;font-size:11.6px;font-weight:bold;color:#5e5e5e;">Панель функций</div><svg class="a" style="left:223px;top:98px;" width="8" height="10" viewBox="0 0 8 10"><rect x="2" y="0" width="4" height="6" fill="#fff" stroke="#e8e8e8" stroke-width="0.5"/><rect x="3.5" y="6" width="1" height="3" fill="#e0e0e0"/></svg><svg class="a" style="left:239px;top:98px;" width="10" height="10" viewBox="0 0 10 10"><path d="M1 1l8 8M9 1L1 9" stroke="#585858" stroke-width="2"/></svg><div class="a" style="left:0px;top:112px;width:253px;height:31px;background:linear-gradient(to right,#f3efe6 0,#f3efe6 180px,#f1ece2 180px);"></div><svg class="a" style="left:5px;top:124px;" width="11" height="6" viewBox="0 0 11 6"><path d="M0 0h11L5.5 6z" fill="#000"/></svg><div class="t" style="left:24px;top:122.29px;font-size:11px;font-weight:bold;color:#3d3200;">Начало работы</div><div class="t" style="left:182px;top:123.09px;font-size:11px;color:#2c4fc4;text-decoration:underline;">Схема</div><svg class="a" style="left:220px;top:113px;" width="33" height="28" viewBox="0 0 33 28"><rect x="1" y="1" width="1" height="1" fill="#a8a498"/><rect x="2" y="1" width="1" height="1" fill="#d8d4c8"/><rect x="1" y="2" width="1" height="1" fill="#d8d4c8"/><rect x="5" y="1" width="1" height="1" fill="#a8a498"/><rect x="6" y="1" width="1" height="1" fill="#d8d4c8"/><rect x="5" y="2" width="1" height="1" fill="#d8d4c8"/><rect x="9" y="1" width="1" height="1" fill="#a8a498"/><rect x="10" y="1" width="1" height="1" fill="#d8d4c8"/><rect x="9" y="2" width="1" height="1" fill="#d8d4c8"/><rect x="13" y="1" width="1" height="1" fill="#a8a498"/><rect x="14" y="1" width="1" height="1" fill="#d8d4c8"/><rect x="13" y="2" width="1" height="1" fill="#d8d4c8"/><rect x="17" y="1" width="1" height="1" fill="#a8a498"/><rect x="18" y="1" width="1" height="1" fill="#d8d4c8"/><rect x="17" y="2" width="1" height="1" fill="#d8d4c8"/><rect x="21" y="1" width="1" height="1" fill="#a8a498"/><rect x="22" y="1" width="1" height="1" fill="#d8d4c8"/><rect x="21" y="2" width="1" height="1" fill="#d8d4c8"/><rect x="25" y="1" width="1" height="1" fill="#a8a498"/><rect x="26" y="1" width="1" height="1" fill="#d8d4c8"/><rect x="25" y="2" width="1" height="1" fill="#d8d4c8"/><rect x="29" y="1" width="1" height="1" fill="#a8a498"/><rect x="30" y="1" width="1" height="1" fill="#d8d4c8"/><rect x="29" y="2" width="1" height="1" fill="#d8d4c8"/><rect x="5" y="5" width="1" height="1" fill="#a8a498"/><rect x="6" y="5" width="1" height="1" fill="#d8d4c8"/><rect x="5" y="6" width="1" height="1" fill="#d8d4c8"/><rect x="9" y="5" width="1" height="1" fill="#a8a498"/><rect x="10" y="5" width="1" height="1" fill="#d8d4c8"/><rect x="9" y="6" width="1" height="1" fill="#d8d4c8"/><rect x="13" y="5" width="1" height="1" fill="#a8a498"/><rect x="14" y="5" width="1" height="1" fill="#d8d4c8"/><rect x="13" y="6" width="1" height="1" fill="#d8d4c8"/><rect x="17" y="5" width="1" height="1" fill="#a8a498"/><rect x="18" y="5" width="1" height="1" fill="#d8d4c8"/><rect x="17" y="6" width="1" height="1" fill="#d8d4c8"/><rect x="21" y="5" width="1" height="1" fill="#a8a498"/><rect x="22" y="5" width="1" height="1" fill="#d8d4c8"/><rect x="21" y="6" width="1" height="1" fill="#d8d4c8"/><rect x="25" y="5" width="1" height="1" fill="#a8a498"/><rect x="26" y="5" width="1" height="1" fill="#d8d4c8"/><rect x="25" y="6" width="1" height="1" fill="#d8d4c8"/><rect x="29" y="5" width="1" height="1" fill="#a8a498"/><rect x="30" y="5" width="1" height="1" fill="#d8d4c8"/><rect x="29" y="6" width="1" height="1" fill="#d8d4c8"/><rect x="9" y="9" width="1" height="1" fill="#a8a498"/><rect x="10" y="9" width="1" height="1" fill="#d8d4c8"/><rect x="9" y="10" width="1" height="1" fill="#d8d4c8"/><rect x="13" y="9" width="1" height="1" fill="#a8a498"/><rect x="14" y="9" width="1" height="1" fill="#d8d4c8"/><rect x="13" y="10" width="1" height="1" fill="#d8d4c8"/><rect x="17" y="9" width="1" height="1" fill="#a8a498"/><rect x="18" y="9" width="1" height="1" fill="#d8d4c8"/><rect x="17" y="10" width="1" height="1" fill="#d8d4c8"/><rect x="21" y="9" width="1" height="1" fill="#a8a498"/><rect x="22" y="9" width="1" height="1" fill="#d8d4c8"/><rect x="21" y="10" width="1" height="1" fill="#d8d4c8"/><rect x="25" y="9" width="1" height="1" fill="#a8a498"/><rect x="26" y="9" width="1" height="1" fill="#d8d4c8"/><rect x="25" y="10" width="1" height="1" fill="#d8d4c8"/><rect x="29" y="9" width="1" height="1" fill="#a8a498"/><rect x="30" y="9" width="1" height="1" fill="#d8d4c8"/><rect x="29" y="10" width="1" height="1" fill="#d8d4c8"/><rect x="13" y="13" width="1" height="1" fill="#a8a498"/><rect x="14" y="13" width="1" height="1" fill="#d8d4c8"/><rect x="13" y="14" width="1" height="1" fill="#d8d4c8"/><rect x="17" y="13" width="1" height="1" fill="#a8a498"/><rect x="18" y="13" width="1" height="1" fill="#d8d4c8"/><rect x="17" y="14" width="1" height="1" fill="#d8d4c8"/><rect x="21" y="13" width="1" height="1" fill="#a8a498"/><rect x="22" y="13" width="1" height="1" fill="#d8d4c8"/><rect x="21" y="14" width="1" height="1" fill="#d8d4c8"/><rect x="25" y="13" width="1" height="1" fill="#a8a498"/><rect x="26" y="13" width="1" height="1" fill="#d8d4c8"/><rect x="25" y="14" width="1" height="1" fill="#d8d4c8"/><rect x="29" y="13" width="1" height="1" fill="#a8a498"/><rect x="30" y="13" width="1" height="1" fill="#d8d4c8"/><rect x="29" y="14" width="1" height="1" fill="#d8d4c8"/><rect x="9" y="17" width="1" height="1" fill="#a8a498"/><rect x="10" y="17" width="1" height="1" fill="#d8d4c8"/><rect x="9" y="18" width="1" height="1" fill="#d8d4c8"/><rect x="13" y="17" width="1" height="1" fill="#a8a498"/><rect x="14" y="17" width="1" height="1" fill="#d8d4c8"/><rect x="13" y="18" width="1" height="1" fill="#d8d4c8"/><rect x="17" y="17" width="1" height="1" fill="#a8a498"/><rect x="18" y="17" width="1" height="1" fill="#d8d4c8"/><rect x="17" y="18" width="1" height="1" fill="#d8d4c8"/><rect x="21" y="17" width="1" height="1" fill="#a8a498"/><rect x="22" y="17" width="1" height="1" fill="#d8d4c8"/><rect x="21" y="18" width="1" height="1" fill="#d8d4c8"/><rect x="25" y="17" width="1" height="1" fill="#a8a498"/><rect x="26" y="17" width="1" height="1" fill="#d8d4c8"/><rect x="25" y="18" width="1" height="1" fill="#d8d4c8"/><rect x="29" y="17" width="1" height="1" fill="#a8a498"/><rect x="30" y="17" width="1" height="1" fill="#d8d4c8"/><rect x="29" y="18" width="1" height="1" fill="#d8d4c8"/><rect x="5" y="21" width="1" height="1" fill="#a8a498"/><rect x="6" y="21" width="1" height="1" fill="#d8d4c8"/><rect x="5" y="22" width="1" height="1" fill="#d8d4c8"/><rect x="9" y="21" width="1" height="1" fill="#a8a498"/><rect x="10" y="21" width="1" height="1" fill="#d8d4c8"/><rect x="9" y="22" width="1" height="1" fill="#d8d4c8"/><rect x="13" y="21" width="1" height="1" fill="#a8a498"/><rect x="14" y="21" width="1" height="1" fill="#d8d4c8"/><rect x="13" y="22" width="1" height="1" fill="#d8d4c8"/><rect x="17" y="21" width="1" height="1" fill="#a8a498"/><rect x="18" y="21" width="1" height="1" fill="#d8d4c8"/><rect x="17" y="22" width="1" height="1" fill="#d8d4c8"/><rect x="21" y="21" width="1" height="1" fill="#a8a498"/><rect x="22" y="21" width="1" height="1" fill="#d8d4c8"/><rect x="21" y="22" width="1" height="1" fill="#d8d4c8"/><rect x="25" y="21" width="1" height="1" fill="#a8a498"/><rect x="26" y="21" width="1" height="1" fill="#d8d4c8"/><rect x="25" y="22" width="1" height="1" fill="#d8d4c8"/><rect x="29" y="21" width="1" height="1" fill="#a8a498"/><rect x="30" y="21" width="1" height="1" fill="#d8d4c8"/><rect x="29" y="22" width="1" height="1" fill="#d8d4c8"/><rect x="1" y="25" width="1" height="1" fill="#a8a498"/><rect x="2" y="25" width="1" height="1" fill="#d8d4c8"/><rect x="1" y="26" width="1" height="1" fill="#d8d4c8"/><rect x="5" y="25" width="1" height="1" fill="#a8a498"/><rect x="6" y="25" width="1" height="1" fill="#d8d4c8"/><rect x="5" y="26" width="1" height="1" fill="#d8d4c8"/><rect x="9" y="25" width="1" height="1" fill="#a8a498"/><rect x="10" y="25" width="1" height="1" fill="#d8d4c8"/><rect x="9" y="26" width="1" height="1" fill="#d8d4c8"/><rect x="13" y="25" width="1" height="1" fill="#a8a498"/><rect x="14" y="25" width="1" height="1" fill="#d8d4c8"/><rect x="13" y="26" width="1" height="1" fill="#d8d4c8"/><rect x="17" y="25" width="1" height="1" fill="#a8a498"/><rect x="18" y="25" width="1" height="1" fill="#d8d4c8"/><rect x="17" y="26" width="1" height="1" fill="#d8d4c8"/><rect x="21" y="25" width="1" height="1" fill="#a8a498"/><rect x="22" y="25" width="1" height="1" fill="#d8d4c8"/><rect x="21" y="26" width="1" height="1" fill="#d8d4c8"/><rect x="25" y="25" width="1" height="1" fill="#a8a498"/><rect x="26" y="25" width="1" height="1" fill="#d8d4c8"/><rect x="25" y="26" width="1" height="1" fill="#d8d4c8"/><rect x="29" y="25" width="1" height="1" fill="#a8a498"/><rect x="30" y="25" width="1" height="1" fill="#d8d4c8"/><rect x="29" y="26" width="1" height="1" fill="#d8d4c8"/></svg><div class="a" style="left:1px;top:143px;width:251px;height:648px;background:#fefcf6;border:1px solid #c9c2a8;"></div><div class="a" style="left:2px;top:144px;width:232px;height:630px;overflow:hidden;"><div class="t" style="left:9px;top:19.28px;font-size:11.6px;font-weight:bold;color:#8a8271;letter-spacing:0.15px;">Быстрое начало</div><div class="t" style="left:27px;top:47.29px;font-size:11px;color:#3354c6;text-decoration:underline;">Стартовый помощник</div><svg class="a" style="left:8px;top:43px;" width="17" height="16" viewBox="0 0 17 16"><path d="M0.5 7.5v7h9v-7" fill="#7cc8e8" stroke="#2a6a98" stroke-width="1"/><rect x="1" y="8" width="8" height="6" fill="#7cc8e8"/><path d="M2 11h6l-3 3z" fill="#0a1a6a"/><path d="M5 2v9" stroke="#000" stroke-dasharray="1 1"/><path d="M5 3h3" stroke="#000" stroke-dasharray="1 1"/><path d="M12 0l4 4-4 4-4-4z" fill="#f4f0a0" stroke="#b0a020" stroke-width="0.8"/><circle cx="12" cy="4" r="0.8" fill="#000"/></svg><div class="t" style="left:27px;top:71.29px;font-size:11px;color:#3354c6;text-decoration:underline;">Быстрое освоение 1С: Управление торговлей</div><svg class="a" style="left:8px;top:67px;" width="17" height="16" viewBox="0 0 17 16"><path d="M0.5 7.5v7h9v-7" fill="#7cc8e8" stroke="#2a6a98" stroke-width="1"/><rect x="1" y="8" width="8" height="6" fill="#7cc8e8"/><path d="M2 11h6l-3 3z" fill="#0a1a6a"/><path d="M5 2v9" stroke="#000" stroke-dasharray="1 1"/><path d="M5 3h3" stroke="#000" stroke-dasharray="1 1"/><path d="M12 0l4 4-4 4-4-4z" fill="#f4f0a0" stroke="#b0a020" stroke-width="0.8"/><circle cx="12" cy="4" r="0.8" fill="#000"/></svg><div class="t" style="left:9px;top:102.28px;font-size:11.6px;font-weight:bold;color:#8a8271;letter-spacing:0.15px;">Ввод сведений о торговом предприятии</div><div class="t" style="left:27px;top:129.79px;font-size:11px;color:#3354c6;text-decoration:underline;">Организации</div><svg class="a" style="left:10px;top:126px;" width="12" height="14" viewBox="0 0 12 14"><rect x="2.5" y="0.5" width="7" height="3" fill="#cdd6de" stroke="#6e7e8c" stroke-width="0.9"/><rect x="2.5" y="2.5" width="7.5" height="3" fill="#e6ecf0" stroke="#7e8e9c" stroke-width="0.9"/><rect x="2.5" y="4.5" width="7" height="6" fill="#fff" stroke="#b0bac4" stroke-width="0.8"/><path d="M4 6.5h4M4 8.5h4" stroke="#c8d0d8" stroke-width="0.7"/><path d="M0 7.5h2l1.5 2h5l1.5-2h2V14H0z" fill="#f2c640"/><path d="M0 11h12v3H0z" fill="#e8b02a"/><path d="M0.5 7.5V14M11.5 7.5V14" stroke="#b89848" stroke-width="0.8"/><circle cx="1.5" cy="8" r="0.6" fill="#202020"/><circle cx="10.5" cy="8" r="0.6" fill="#202020"/></svg><div class="t" style="left:27px;top:153.79px;font-size:11px;color:#3354c6;text-decoration:underline;">Подразделения</div><svg class="a" style="left:10px;top:150px;" width="12" height="14" viewBox="0 0 12 14"><rect x="2.5" y="0.5" width="7" height="3" fill="#cdd6de" stroke="#6e7e8c" stroke-width="0.9"/><rect x="2.5" y="2.5" width="7.5" height="3" fill="#e6ecf0" stroke="#7e8e9c" stroke-width="0.9"/><rect x="2.5" y="4.5" width="7" height="6" fill="#fff" stroke="#b0bac4" stroke-width="0.8"/><path d="M4 6.5h4M4 8.5h4" stroke="#c8d0d8" stroke-width="0.7"/><path d="M0 7.5h2l1.5 2h5l1.5-2h2V14H0z" fill="#f2c640"/><path d="M0 11h12v3H0z" fill="#e8b02a"/><path d="M0.5 7.5V14M11.5 7.5V14" stroke="#b89848" stroke-width="0.8"/><circle cx="1.5" cy="8" r="0.6" fill="#202020"/><circle cx="10.5" cy="8" r="0.6" fill="#202020"/></svg><div class="t" style="left:27px;top:177.79px;font-size:11px;color:#3354c6;text-decoration:underline;">Ответственные лица</div><svg class="a" style="left:10px;top:174px;" width="12" height="14" viewBox="0 0 12 14"><rect x="2.5" y="0.5" width="7" height="3" fill="#cdd6de" stroke="#6e7e8c" stroke-width="0.9"/><rect x="2.5" y="2.5" width="7.5" height="3" fill="#e6ecf0" stroke="#7e8e9c" stroke-width="0.9"/><rect x="2.5" y="4.5" width="7" height="6" fill="#fff" stroke="#b0bac4" stroke-width="0.8"/><path d="M4 6.5h4M4 8.5h4" stroke="#c8d0d8" stroke-width="0.7"/><path d="M0 7.5h2l1.5 2h5l1.5-2h2V14H0z" fill="#f2c640"/><path d="M0 11h12v3H0z" fill="#e8b02a"/><path d="M0.5 7.5V14M11.5 7.5V14" stroke="#b89848" stroke-width="0.8"/><circle cx="1.5" cy="8" r="0.6" fill="#202020"/><circle cx="10.5" cy="8" r="0.6" fill="#202020"/></svg><div class="t" style="left:27px;top:201.79px;font-size:11px;color:#3354c6;text-decoration:underline;">Ответственные лица организации</div><svg class="a" style="left:10px;top:198px;" width="12" height="14" viewBox="0 0 12 14"><rect x="2.5" y="0.5" width="7" height="3" fill="#cdd6de" stroke="#6e7e8c" stroke-width="0.9"/><rect x="2.5" y="2.5" width="7.5" height="3" fill="#e6ecf0" stroke="#7e8e9c" stroke-width="0.9"/><rect x="2.5" y="4.5" width="7" height="6" fill="#fff" stroke="#b0bac4" stroke-width="0.8"/><path d="M4 6.5h4M4 8.5h4" stroke="#c8d0d8" stroke-width="0.7"/><path d="M0 7.5h2l1.5 2h5l1.5-2h2V14H0z" fill="#f2c640"/><path d="M0 11h12v3H0z" fill="#e8b02a"/><path d="M0.5 7.5V14M11.5 7.5V14" stroke="#b89848" stroke-width="0.8"/><circle cx="1.5" cy="8" r="0.6" fill="#202020"/><circle cx="10.5" cy="8" r="0.6" fill="#202020"/></svg><div class="t" style="left:27px;top:225.79px;font-size:11px;color:#3354c6;text-decoration:underline;">Склады (места хранения)</div><svg class="a" style="left:10px;top:222px;" width="12" height="14" viewBox="0 0 12 14"><rect x="2.5" y="0.5" width="7" height="3" fill="#cdd6de" stroke="#6e7e8c" stroke-width="0.9"/><rect x="2.5" y="2.5" width="7.5" height="3" fill="#e6ecf0" stroke="#7e8e9c" stroke-width="0.9"/><rect x="2.5" y="4.5" width="7" height="6" fill="#fff" stroke="#b0bac4" stroke-width="0.8"/><path d="M4 6.5h4M4 8.5h4" stroke="#c8d0d8" stroke-width="0.7"/><path d="M0 7.5h2l1.5 2h5l1.5-2h2V14H0z" fill="#f2c640"/><path d="M0 11h12v3H0z" fill="#e8b02a"/><path d="M0.5 7.5V14M11.5 7.5V14" stroke="#b89848" stroke-width="0.8"/><circle cx="1.5" cy="8" r="0.6" fill="#202020"/><circle cx="10.5" cy="8" r="0.6" fill="#202020"/></svg><div class="t" style="left:9px;top:256.78px;font-size:11.6px;font-weight:bold;color:#8a8271;letter-spacing:0.15px;">Настройки</div><div class="t" style="left:27px;top:285.29px;font-size:11px;color:#3354c6;text-decoration:underline;">Настройки параметров учета</div><svg class="a" style="left:10px;top:281px;" width="12" height="14" viewBox="0 0 12 14"><rect x="2.5" y="0.5" width="7" height="3" fill="#cdd6de" stroke="#6e7e8c" stroke-width="0.9"/><rect x="2.5" y="2.5" width="7.5" height="3" fill="#e6ecf0" stroke="#7e8e9c" stroke-width="0.9"/><rect x="2.5" y="4.5" width="7" height="6" fill="#fff" stroke="#b0bac4" stroke-width="0.8"/><path d="M4 6.5h4M4 8.5h4" stroke="#c8d0d8" stroke-width="0.7"/><path d="M0 7.5h2l1.5 2h5l1.5-2h2V14H0z" fill="#f2c640"/><path d="M0 11h12v3H0z" fill="#e8b02a"/><path d="M0.5 7.5V14M11.5 7.5V14" stroke="#b89848" stroke-width="0.8"/><circle cx="1.5" cy="8" r="0.6" fill="#202020"/><circle cx="10.5" cy="8" r="0.6" fill="#202020"/></svg><div class="t" style="left:27px;top:309.29px;font-size:11px;color:#3354c6;text-decoration:underline;">Учетная политика предприятия</div><svg class="a" style="left:10px;top:305px;" width="12" height="14" viewBox="0 0 12 14"><rect x="2.5" y="0.5" width="7" height="3" fill="#cdd6de" stroke="#6e7e8c" stroke-width="0.9"/><rect x="2.5" y="2.5" width="7.5" height="3" fill="#e6ecf0" stroke="#7e8e9c" stroke-width="0.9"/><rect x="2.5" y="4.5" width="7" height="6" fill="#fff" stroke="#b0bac4" stroke-width="0.8"/><path d="M4 6.5h4M4 8.5h4" stroke="#c8d0d8" stroke-width="0.7"/><path d="M0 7.5h2l1.5 2h5l1.5-2h2V14H0z" fill="#f2c640"/><path d="M0 11h12v3H0z" fill="#e8b02a"/><path d="M0.5 7.5V14M11.5 7.5V14" stroke="#b89848" stroke-width="0.8"/><circle cx="1.5" cy="8" r="0.6" fill="#202020"/><circle cx="10.5" cy="8" r="0.6" fill="#202020"/></svg><div class="t" style="left:27px;top:333.29px;font-size:11px;color:#3354c6;text-decoration:underline;">Учетная политика (налоговый учет)</div><svg class="a" style="left:10px;top:329px;" width="12" height="14" viewBox="0 0 12 14"><rect x="2.5" y="0.5" width="7" height="3" fill="#cdd6de" stroke="#6e7e8c" stroke-width="0.9"/><rect x="2.5" y="2.5" width="7.5" height="3" fill="#e6ecf0" stroke="#7e8e9c" stroke-width="0.9"/><rect x="2.5" y="4.5" width="7" height="6" fill="#fff" stroke="#b0bac4" stroke-width="0.8"/><path d="M4 6.5h4M4 8.5h4" stroke="#c8d0d8" stroke-width="0.7"/><path d="M0 7.5h2l1.5 2h5l1.5-2h2V14H0z" fill="#f2c640"/><path d="M0 11h12v3H0z" fill="#e8b02a"/><path d="M0.5 7.5V14M11.5 7.5V14" stroke="#b89848" stroke-width="0.8"/><circle cx="1.5" cy="8" r="0.6" fill="#202020"/><circle cx="10.5" cy="8" r="0.6" fill="#202020"/></svg><div class="t" style="left:9px;top:364.28px;font-size:11.6px;font-weight:bold;color:#8a8271;letter-spacing:0.15px;">Пользователи</div><div class="t" style="left:27px;top:392.79px;font-size:11px;color:#3354c6;text-decoration:underline;">Список пользователей</div><svg class="a" style="left:10px;top:389px;" width="12" height="14" viewBox="0 0 12 14"><rect x="2.5" y="0.5" width="7" height="3" fill="#cdd6de" stroke="#6e7e8c" stroke-width="0.9"/><rect x="2.5" y="2.5" width="7.5" height="3" fill="#e6ecf0" stroke="#7e8e9c" stroke-width="0.9"/><rect x="2.5" y="4.5" width="7" height="6" fill="#fff" stroke="#b0bac4" stroke-width="0.8"/><path d="M4 6.5h4M4 8.5h4" stroke="#c8d0d8" stroke-width="0.7"/><path d="M0 7.5h2l1.5 2h5l1.5-2h2V14H0z" fill="#f2c640"/><path d="M0 11h12v3H0z" fill="#e8b02a"/><path d="M0.5 7.5V14M11.5 7.5V14" stroke="#b89848" stroke-width="0.8"/><circle cx="1.5" cy="8" r="0.6" fill="#202020"/><circle cx="10.5" cy="8" r="0.6" fill="#202020"/></svg><div class="t" style="left:27px;top:416.79px;font-size:11px;color:#3354c6;text-decoration:underline;">Настройки пользователя</div><svg class="a" style="left:10px;top:413px;" width="12" height="14" viewBox="0 0 12 14"><rect x="2.5" y="0.5" width="7" height="3" fill="#cdd6de" stroke="#6e7e8c" stroke-width="0.9"/><rect x="2.5" y="2.5" width="7.5" height="3" fill="#e6ecf0" stroke="#7e8e9c" stroke-width="0.9"/><rect x="2.5" y="4.5" width="7" height="6" fill="#fff" stroke="#b0bac4" stroke-width="0.8"/><path d="M4 6.5h4M4 8.5h4" stroke="#c8d0d8" stroke-width="0.7"/><path d="M0 7.5h2l1.5 2h5l1.5-2h2V14H0z" fill="#f2c640"/><path d="M0 11h12v3H0z" fill="#e8b02a"/><path d="M0.5 7.5V14M11.5 7.5V14" stroke="#b89848" stroke-width="0.8"/><circle cx="1.5" cy="8" r="0.6" fill="#202020"/><circle cx="10.5" cy="8" r="0.6" fill="#202020"/></svg><div class="t" style="left:27px;top:440.79px;font-size:11px;color:#3354c6;text-decoration:underline;">Проверка установленных режимов работы</div><svg class="a" style="left:10px;top:437px;" width="12" height="14" viewBox="0 0 12 14"><path d="M0.5 0.5h7l3 3v10h-10z" fill="#fdfdfd" stroke="#8e8e98"/><path d="M7.5 0.5v3h3" fill="none" stroke="#8e8e98"/><rect x="2.5" y="5.5" width="6" height="2" fill="none" stroke="#9a9aa8" stroke-width="0.8"/><rect x="2.5" y="8.5" width="6" height="3" fill="none" stroke="#9a9aa8" stroke-width="0.8"/><path d="M5.5 8.5v3" stroke="#9a9aa8" stroke-width="0.8"/></svg><div class="t" style="left:9px;top:471.28px;font-size:11.6px;font-weight:bold;color:#8a8271;letter-spacing:0.15px;">Начальное заполнение справочников</div><div class="t" style="left:27px;top:499.29px;font-size:11px;color:#3354c6;text-decoration:underline;">Контрагенты</div><svg class="a" style="left:10px;top:495px;" width="12" height="14" viewBox="0 0 12 14"><rect x="2.5" y="0.5" width="7" height="3" fill="#cdd6de" stroke="#6e7e8c" stroke-width="0.9"/><rect x="2.5" y="2.5" width="7.5" height="3" fill="#e6ecf0" stroke="#7e8e9c" stroke-width="0.9"/><rect x="2.5" y="4.5" width="7" height="6" fill="#fff" stroke="#b0bac4" stroke-width="0.8"/><path d="M4 6.5h4M4 8.5h4" stroke="#c8d0d8" stroke-width="0.7"/><path d="M0 7.5h2l1.5 2h5l1.5-2h2V14H0z" fill="#f2c640"/><path d="M0 11h12v3H0z" fill="#e8b02a"/><path d="M0.5 7.5V14M11.5 7.5V14" stroke="#b89848" stroke-width="0.8"/><circle cx="1.5" cy="8" r="0.6" fill="#202020"/><circle cx="10.5" cy="8" r="0.6" fill="#202020"/></svg><div class="t" style="left:27px;top:523.29px;font-size:11px;color:#3354c6;text-decoration:underline;">Номенклатура</div><svg class="a" style="left:10px;top:519px;" width="12" height="14" viewBox="0 0 12 14"><rect x="2.5" y="0.5" width="7" height="3" fill="#cdd6de" stroke="#6e7e8c" stroke-width="0.9"/><rect x="2.5" y="2.5" width="7.5" height="3" fill="#e6ecf0" stroke="#7e8e9c" stroke-width="0.9"/><rect x="2.5" y="4.5" width="7" height="6" fill="#fff" stroke="#b0bac4" stroke-width="0.8"/><path d="M4 6.5h4M4 8.5h4" stroke="#c8d0d8" stroke-width="0.7"/><path d="M0 7.5h2l1.5 2h5l1.5-2h2V14H0z" fill="#f2c640"/><path d="M0 11h12v3H0z" fill="#e8b02a"/><path d="M0.5 7.5V14M11.5 7.5V14" stroke="#b89848" stroke-width="0.8"/><circle cx="1.5" cy="8" r="0.6" fill="#202020"/><circle cx="10.5" cy="8" r="0.6" fill="#202020"/></svg><div class="t" style="left:27px;top:547.29px;font-size:11px;color:#3354c6;text-decoration:underline;">Номенклатурные группы</div><svg class="a" style="left:10px;top:543px;" width="12" height="14" viewBox="0 0 12 14"><rect x="2.5" y="0.5" width="7" height="3" fill="#cdd6de" stroke="#6e7e8c" stroke-width="0.9"/><rect x="2.5" y="2.5" width="7.5" height="3" fill="#e6ecf0" stroke="#7e8e9c" stroke-width="0.9"/><rect x="2.5" y="4.5" width="7" height="6" fill="#fff" stroke="#b0bac4" stroke-width="0.8"/><path d="M4 6.5h4M4 8.5h4" stroke="#c8d0d8" stroke-width="0.7"/><path d="M0 7.5h2l1.5 2h5l1.5-2h2V14H0z" fill="#f2c640"/><path d="M0 11h12v3H0z" fill="#e8b02a"/><path d="M0.5 7.5V14M11.5 7.5V14" stroke="#b89848" stroke-width="0.8"/><circle cx="1.5" cy="8" r="0.6" fill="#202020"/><circle cx="10.5" cy="8" r="0.6" fill="#202020"/></svg><div class="t" style="left:9px;top:578.78px;font-size:11.6px;font-weight:bold;color:#8a8271;letter-spacing:0.15px;">Ввод начальных остатков</div><div class="t" style="left:27px;top:606.29px;font-size:11px;color:#3354c6;text-decoration:underline;">Ввод начальных остатков наличных денежных средств</div><svg class="a" style="left:10px;top:602px;" width="12" height="14" viewBox="0 0 12 14"><path d="M0.5 0.5h7l3 3v10h-10z" fill="#fdfdfd" stroke="#8e8e98"/><path d="M7.5 0.5v3h3" fill="none" stroke="#8e8e98"/><rect x="2.5" y="5.5" width="6" height="2" fill="none" stroke="#9a9aa8" stroke-width="0.8"/><rect x="2.5" y="8.5" width="6" height="3" fill="none" stroke="#9a9aa8" stroke-width="0.8"/><path d="M5.5 8.5v3" stroke="#9a9aa8" stroke-width="0.8"/></svg><div class="t" style="left:27px;top:630.29px;font-size:11px;color:#3354c6;text-decoration:underline;">Ввод</div><svg class="a" style="left:10px;top:626px;" width="12" height="14" viewBox="0 0 12 14"><path d="M0.5 0.5h7l3 3v10h-10z" fill="#fdfdfd" stroke="#8e8e98"/><path d="M7.5 0.5v3h3" fill="none" stroke="#8e8e98"/><rect x="2.5" y="5.5" width="6" height="2" fill="none" stroke="#9a9aa8" stroke-width="0.8"/><rect x="2.5" y="8.5" width="6" height="3" fill="none" stroke="#9a9aa8" stroke-width="0.8"/><path d="M5.5 8.5v3" stroke="#9a9aa8" stroke-width="0.8"/></svg></div><div class="a" style="left:234px;top:144px;width:17px;height:16px;background:#f4f0e2;border:1px solid #c9c1a5;"></div><svg class="a" style="left:238px;top:149px;" width="8" height="6" viewBox="0 0 8 6"><path d="M0 5h7L3.5 0z" fill="#8a8674"/></svg><div class="a" style="left:234px;top:160px;width:17px;height:458px;background:linear-gradient(to right,#f8f4e6,#f3ecd6);border:1px solid #c9c1a5;border-top:none;"></div><div class="a" style="left:234px;top:758px;width:17px;height:16px;background:#f4f0e2;border:1px solid #c9c1a5;"></div><svg class="a" style="left:238px;top:763px;" width="8" height="6" viewBox="0 0 8 6"><path d="M0 0h7L3.5 5z" fill="#8a8674"/></svg><div class="a" style="left:2px;top:774px;width:16px;height:16px;background:#f4f0e2;border:1px solid #c9c1a5;"></div><svg class="a" style="left:7px;top:778px;" width="6" height="8" viewBox="0 0 6 8"><path d="M5 0v7L0 3.5z" fill="#8a8674"/></svg><div class="a" style="left:18px;top:774px;width:128px;height:16px;background:linear-gradient(to bottom,#fbf7ea,#f0e6c5);border:1px solid #c9c1a5;border-left:none;"></div><div class="a" style="left:218px;top:774px;width:16px;height:16px;background:#f4f0e2;border:1px solid #c9c1a5;"></div><svg class="a" style="left:224px;top:778px;" width="6" height="8" viewBox="0 0 6 8"><path d="M0 0v7L5 3.5z" fill="#8a8674"/></svg><div class="a" style="left:234px;top:774px;width:17px;height:16px;background:#f4f0e2;"></div><div class="a" style="left:0px;top:791px;width:253px;height:22px;background:#efe9df;"></div><div class="a" style="left:4px;top:792px;width:116px;height:20px;background:#efe7d2;border:1px solid #dcd2b4;border-top:none;border-radius:0 0 6px 6px;"></div><svg class="a" style="left:14px;top:795px;" width="15" height="15" viewBox="0 0 15 15"><circle cx="7.5" cy="7.5" r="7" fill="#f2b060" stroke="#c98538"/><circle cx="7.5" cy="7" r="5" fill="#f8cf90"/><text x="4.3" y="11.5" font-size="10" font-weight="bold" font-family="Liberation Sans" fill="#6a4a20">?</text></svg><div class="t" style="left:32px;top:798.29px;font-size:11px;color:#222;">Справка: Нач...</div><div class="a" style="left:126px;top:792px;width:116px;height:20px;background:#fdfbf5;border:1px solid #dcd2b4;border-top:none;border-bottom:2px solid #f5c888;border-radius:0 0 6px 6px;"></div><svg class="a" style="left:136px;top:794px;" width="15" height="16" viewBox="0 0 15 16"><rect x="0.5" y="0.5" width="13" height="14" fill="#f0f0f0" stroke="#7a2a1a"/><rect x="2" y="2" width="3" height="11" fill="#8a3020"/><rect x="6" y="3" width="6" height="8" fill="#9ab8d0"/><path d="M11 12l3 3" stroke="#2a9a2a" stroke-width="1.5"/></svg><div class="t" style="left:154px;top:798.29px;font-size:11px;color:#222;">Панель функ...</div>

<!-- MAIN WINDOW -->
<div class="a" style="left:257px;top:94px;width:1341px;height:718px;background:#fdfbf5;"></div><div class="a" style="left:257px;top:94px;width:1341px;height:2px;background:#4a4540;"></div><div class="a" style="left:257px;top:94px;width:2px;height:718px;background:#2e2a28;"></div><div class="a" style="left:1597px;top:96px;width:1px;height:716px;background:#d8d4cf;"></div><div class="a" style="left:259px;top:811px;width:1339px;height:1px;background:#d8d4cf;"></div><div class="a" style="left:259px;top:96px;width:1338px;height:18px;background:#d0d0d0;"></div><div class="a" style="left:259px;top:114px;width:1338px;height:1px;background:#5a5550;"></div><svg class="a" style="left:262px;top:97px;" width="13" height="15" viewBox="0 0 13 15"><path d="M0.5 0.5h8l3 3v10h-11z" fill="#fdfdfd" stroke="#8a9ab0"/><rect x="2.5" y="4" width="1.5" height="7" fill="#e04020"/><rect x="5" y="6" width="1.5" height="5" fill="#f0a020"/><rect x="7.5" y="7" width="1.5" height="4" fill="#30a030"/><path d="M2 11.5h8" stroke="#8aa0c0"/></svg><div class="t" style="left:280px;top:99.19px;font-size:12px;font-weight:bold;color:#1c1c1c;letter-spacing:0.2px;">Анализ заказа покупателя</div><div class="a" style="left:1544px;top:108px;width:9px;height:2px;background:#1a1a1a;"></div><svg class="a" style="left:1562px;top:99px;" width="12" height="12" viewBox="0 0 12 12"><rect x="3.5" y="0.5" width="7" height="6" fill="none" stroke="#1a1a1a"/><rect x="3" y="0" width="8" height="2" fill="#1a1a1a"/><rect x="0.5" y="4.5" width="7" height="6" fill="#d0d0d0" stroke="#1a1a1a"/><rect x="0" y="4" width="8" height="2" fill="#1a1a1a"/></svg><svg class="a" style="left:1584px;top:100px;" width="9" height="9" viewBox="0 0 9 9"><path d="M1 1l7 7M8 1L1 8" stroke="#1a1a1a" stroke-width="2"/></svg><div class="a" style="left:259px;top:115px;width:1338px;height:24px;background:#eee7de;"></div><div class="a" style="left:259px;top:139px;width:1338px;height:1px;background:#b4ad96;"></div><div class="a" style="left:262px;top:118px;width:62px;height:18px;border:1px dotted #202020;"></div><div class="t" style="left:264px;top:122.29px;font-size:11px;color:#3a3020;">Действия</div><svg class="a" style="left:316px;top:126px;" width="5" height="3" viewBox="0 0 5 3"><path d="M0 0h5L2.5 3z" fill="#3a3020"/></svg><div class="a" style="left:327px;top:118px;width:1px;height:19px;background:#d5cdbd;"></div><div class="a" style="left:328px;top:118px;width:1px;height:19px;background:#fbf9f4;"></div><svg class="a" style="left:338px;top:121px;" width="8" height="12" viewBox="0 0 8 12"><path d="M0 0l8 6-8 6z" fill="#1e9a2a"/></svg><div class="t" style="left:352.5px;top:122.79px;font-size:11px;font-weight:bold;color:#3a3010;letter-spacing:0.2px;">Сформировать</div><div class="a" style="left:446px;top:118px;width:1px;height:19px;background:#d5cdbd;"></div><div class="a" style="left:447px;top:118px;width:1px;height:19px;background:#fbf9f4;"></div><svg class="a" style="left:453px;top:120px;" width="15" height="15" viewBox="0 0 15 15"><rect x="0.5" y="0.5" width="8" height="10" fill="#f4f6fa" stroke="#c8d0dc"/><rect x="5.5" y="4.5" width="9" height="10" fill="#f4f6fa" stroke="#c8d0dc"/><path d="M7 7h6M7 9h6M7 11h6" stroke="#d0d8e2"/></svg><div class="a" style="left:474px;top:118px;width:1px;height:19px;background:#d5cdbd;"></div><div class="a" style="left:475px;top:118px;width:1px;height:19px;background:#fbf9f4;"></div><svg class="a" style="left:481px;top:119px;" width="16" height="16" viewBox="0 0 16 16"><circle cx="8" cy="8" r="7.5" fill="#f2b060" stroke="#cf8a40"/><circle cx="8" cy="7.5" r="5.5" fill="#f8cf90"/><text x="4.6" y="12" font-size="11" font-weight="bold" font-family="Liberation Sans" fill="#7a5020">?</text></svg><div class="t" style="left:268px;top:152.89px;font-size:11px;color:#3c3420;">Заказ:</div><div class="a" style="left:309px;top:148px;width:989px;height:19px;background:#fff;border:1px solid #b8b29c;"></div><div class="t" style="left:313px;top:152.89px;font-size:11px;color:#111;letter-spacing:0.1px;">Заказ покупателя УТРЭ0000450 от 06.08.2014 14:48:12</div><div class="a" style="left:1297px;top:148px;width:16px;height:19px;background:#ece6d6;border:1px solid #b8b29c;"></div><svg class="a" style="left:1300px;top:161px;" width="10" height="2" viewBox="0 0 10 2"><rect x="0" y="0" width="2" height="2" fill="#3a3010"/><rect x="4" y="0" width="2" height="2" fill="#3a3010"/><rect x="8" y="0" width="2" height="2" fill="#3a3010"/></svg><div class="a" style="left:1312px;top:148px;width:16px;height:19px;background:#ece6d6;border:1px solid #b8b29c;"></div><svg class="a" style="left:1316px;top:152px;" width="9" height="9" viewBox="0 0 9 9"><path d="M1 1l7 7M8 1L1 8" stroke="#4a3a10" stroke-width="1.6"/></svg><div class="t" style="left:1349px;top:152.89px;font-size:11px;color:#2a2418;">Дата и время анализа:</div><div class="a" style="left:1470px;top:148px;width:91px;height:19px;background:#fff;border:1px solid #b8b29c;"></div><div class="t" style="left:1478px;top:152.89px;font-size:11px;color:#222;">.&nbsp;&nbsp;.&nbsp;&nbsp;&nbsp;&nbsp;&nbsp;&nbsp;&nbsp;&nbsp;:&nbsp;&nbsp;:</div><div class="a" style="left:1560px;top:148px;width:15px;height:19px;background:#ece6d6;border:1px solid #b8b29c;"></div><svg class="a" style="left:1562px;top:151px;" width="10" height="11" viewBox="0 0 10 11"><rect x="0.5" y="0.5" width="9" height="10" fill="#f2e4b0" stroke="#6a5010"/><path d="M0.5 3.5h9M0.5 6h9M0.5 8.5h9M3.5 0.5v10M6.5 0.5v10" stroke="#6a5010" stroke-width="0.8"/></svg><div class="a" style="left:1574px;top:148px;width:16px;height:19px;background:#ece6d6;border:1px solid #b8b29c;"></div><svg class="a" style="left:1578px;top:152px;" width="9" height="9" viewBox="0 0 9 9"><path d="M1 1l7 7M8 1L1 8" stroke="#4a3a10" stroke-width="1.6"/></svg><div class="a" style="left:267px;top:172px;width:1323px;height:631px;background:#fff;border:1px solid #b9b196;"></div><div class="a" style="left:268px;top:173px;width:28px;height:613px;background:#fcfaf3;"></div><div class="a" style="left:296px;top:173px;width:1px;height:613px;background:#c6bfa6;"></div><div class="a" style="left:1573px;top:172px;width:17px;height:614px;background:#fdfbf4;border:1px solid #b9b196;"></div><div class="a" style="left:1573px;top:172px;width:17px;height:22px;background:linear-gradient(to bottom,#fbf8ee,#f2ecdb);border:1px solid #b9b196;"></div><svg class="a" style="left:1578px;top:179px;" width="7" height="7" viewBox="0 0 7 7"><path d="M0 7h7L3.5 0z" fill="#c8c4b8"/></svg><div class="a" style="left:1573px;top:193px;width:17px;height:493px;background:linear-gradient(to right,#fcf9ef,#f4ebcf 60%,#e6dcb5);border:1px solid #b9b196;"></div><svg class="a" style="left:1579px;top:436px;" width="6" height="6" viewBox="0 0 6 6"><path d="M1 3c0-2 2-3 4-2" stroke="#b8b4a0" stroke-width="1.5" fill="none"/></svg><div class="a" style="left:1573px;top:765px;width:17px;height:21px;background:linear-gradient(to bottom,#fbf8ee,#f2ecdb);border:1px solid #b9b196;"></div><svg class="a" style="left:1577px;top:772px;" width="8" height="7" viewBox="0 0 8 7"><path d="M0 0h8L4 7z" fill="#6e6c66"/></svg><div class="a" style="left:267px;top:786px;width:1306px;height:17px;background:#fdfbf4;border:1px solid #b9b196;"></div><div class="a" style="left:267px;top:786px;width:22px;height:17px;background:linear-gradient(to right,#fbf8ee,#f2ecdb);border:1px solid #b9b196;"></div><svg class="a" style="left:274px;top:790px;" width="7" height="8" viewBox="0 0 7 8"><path d="M7 0v8L0 4z" fill="#c8c4b8"/></svg><div class="a" style="left:288px;top:786px;width:1149px;height:17px;background:linear-gradient(to bottom,#fcf9ef,#f4ebcf 60%,#e6dcb5);border:1px solid #b9b196;"></div><svg class="a" style="left:859px;top:791px;" width="6" height="6" viewBox="0 0 6 6"><path d="M1 5c0-2 2-4 4-3" stroke="#b8b4a0" stroke-width="1.5" fill="none"/></svg><div class="a" style="left:1552px;top:786px;width:22px;height:17px;background:linear-gradient(to bottom,#fbf8ee,#f2ecdb);border:1px solid #b9b196;"></div><svg class="a" style="left:1560px;top:790px;" width="7" height="8" viewBox="0 0 7 8"><path d="M0 0v8L7 4z" fill="#6e6c66"/></svg><div class="a" style="left:1573px;top:786px;width:17px;height:17px;background:#fdfbf4;border:1px solid #b9b196;"></div><div class="t" style="left:335.75px;top:176.35px;font-size:15px;font-weight:bold;letter-spacing:0.55px;">Состояние заказа по документу Заказ покупателя УТРЭ0000450 от 06.08.2014 14:48:12</div><div class="t" style="left:547.7px;top:196.15px;font-size:15px;font-weight:bold;letter-spacing:0.55px;">на момент последнего движения</div><div class="t" style="left:306.7px;top:215.94px;font-size:10.7px;letter-spacing:0.1px;">Контрагент:Контейнер СПб, ООО</div><div class="t" style="left:306.7px;top:231.04px;font-size:10.7px;letter-spacing:0.2px;">Договор контрагента: Основной договор</div><div class="a" style="left:303px;top:243px;width:1063px;height:1px;background:#000;"></div><div class="t" style="left:305px;top:245.94px;font-size:10.7px;font-weight:bold;letter-spacing:0.35px;">По номенклатуре:</div><div class="a" style="left:303px;top:258px;width:959px;height:2px;background:#000;"></div><div class="a" style="left:303px;top:352px;width:959px;height:2px;background:#000;"></div><div class="a" style="left:303px;top:323px;width:959px;height:2px;background:#000;"></div><div class="a" style="left:303px;top:308px;width:959px;height:1px;background:#000;"></div><div class="a" style="left:513px;top:275px;width:747px;height:1px;background:#000;"></div><div class="a" style="left:303px;top:258px;width:2px;height:96px;background:#000;"></div><div class="a" style="left:1260px;top:258px;width:2px;height:96px;background:#000;"></div><div class="a" style="left:513px;top:258px;width:2px;height:96px;background:#000;"></div><div class="a" style="left:840px;top:258px;width:2px;height:96px;background:#000;"></div><div class="a" style="left:630px;top:275px;width:1px;height:77px;background:#000;"></div><div class="a" style="left:735px;top:275px;width:1px;height:77px;background:#000;"></div><div class="a" style="left:945px;top:275px;width:1px;height:77px;background:#000;"></div><div class="a" style="left:1050px;top:275px;width:1px;height:77px;background:#000;"></div><div class="a" style="left:1155px;top:275px;width:1px;height:77px;background:#000;"></div><div class="t" style="left:209.00px;top:270.34px;width:400px;text-align:center;font-size:12px;font-weight:bold;letter-spacing:0.7px;">Номенклатура заказа /</div><div class="t" style="left:209.00px;top:285.94px;width:400px;text-align:center;font-size:12px;font-weight:bold;letter-spacing:0.7px;">характеристика</div><div class="t" style="left:477.50px;top:262.34px;width:400px;text-align:center;font-size:12px;font-weight:bold;letter-spacing:0.7px;">Заказ</div><div class="t" style="left:851.00px;top:262.34px;width:400px;text-align:center;font-size:12px;font-weight:bold;letter-spacing:0.7px;">Комплектация</div><div class="t" style="left:372.50px;top:287.74px;width:400px;text-align:center;font-size:12px;font-weight:bold;letter-spacing:0.7px;">Запланировано</div><div class="t" style="left:483.00px;top:279.19px;width:400px;text-align:center;font-size:12px;font-weight:bold;letter-spacing:0.7px;">Отгружено /</div><div class="t" style="left:483.00px;top:294.94px;width:400px;text-align:center;font-size:12px;font-weight:bold;letter-spacing:0.7px;">отменено</div><div class="t" style="left:588.00px;top:279.19px;width:400px;text-align:center;font-size:12px;font-weight:bold;letter-spacing:0.7px;">Осталось</div><div class="t" style="left:588.00px;top:294.94px;width:400px;text-align:center;font-size:12px;font-weight:bold;letter-spacing:0.7px;">отгрузить</div><div class="t" style="left:693.50px;top:287.74px;width:400px;text-align:center;font-size:12px;font-weight:bold;letter-spacing:0.7px;">Резерв</div><div class="t" style="left:798.00px;top:287.74px;width:400px;text-align:center;font-size:12px;font-weight:bold;letter-spacing:0.7px;">Заказано</div><div class="t" style="left:903.00px;top:279.19px;width:400px;text-align:center;font-size:12px;font-weight:bold;letter-spacing:0.7px;">Свободный</div><div class="t" style="left:903.00px;top:294.94px;width:400px;text-align:center;font-size:12px;font-weight:bold;letter-spacing:0.7px;">остаток</div><div class="t" style="left:1008.00px;top:279.19px;width:400px;text-align:center;font-size:12px;font-weight:bold;letter-spacing:0.7px;">Осталось</div><div class="t" style="left:1008.00px;top:294.94px;width:400px;text-align:center;font-size:12px;font-weight:bold;letter-spacing:0.7px;">обеспечить</div><div class="t" style="left:209.00px;top:311.54px;width:400px;text-align:center;font-size:10.7px;">1</div><div class="t" style="left:372.50px;top:311.54px;width:400px;text-align:center;font-size:10.7px;">2</div><div class="t" style="left:483.00px;top:311.54px;width:400px;text-align:center;font-size:10.7px;">3</div><div class="t" style="left:588.00px;top:311.54px;width:400px;text-align:center;font-size:10.7px;">4</div><div class="t" style="left:693.50px;top:311.54px;width:400px;text-align:center;font-size:10.7px;">5</div><div class="t" style="left:798.00px;top:311.54px;width:400px;text-align:center;font-size:10.7px;">6</div><div class="t" style="left:903.00px;top:311.54px;width:400px;text-align:center;font-size:10.7px;">7</div><div class="t" style="left:1008.00px;top:311.54px;width:400px;text-align:center;font-size:10.7px;">8</div><div class="t" style="left:306px;top:326.04px;font-size:10.7px;letter-spacing:0.12px;">Изолятор шинный плоский ИШП для</div><div class="t" style="left:306px;top:339.79px;font-size:10.7px;letter-spacing:0.12px;">шин 5 и 10 мм 270 мм TDM, шт</div><div class="t" style="left:227px;top:326.04px;width:400px;text-align:right;font-size:10.7px;">8,000</div><div class="t" style="left:332px;top:326.04px;width:400px;text-align:right;font-size:10.7px;">0,000</div><div class="t" style="left:437px;top:326.04px;width:400px;text-align:right;font-size:10.7px;">8,000</div><div class="t" style="left:542px;top:326.04px;width:400px;text-align:right;font-size:10.7px;">0,000</div><div class="t" style="left:647px;top:326.04px;width:400px;text-align:right;font-size:10.7px;">0,000</div><div class="t" style="left:752px;top:326.04px;width:400px;text-align:right;font-size:10.7px;">1 182,000</div><div class="t" style="left:857px;top:326.04px;width:400px;text-align:right;font-size:10.7px;">8,000</div><div class="a" style="left:1047px;top:271px;width:116px;height:98px;border:5px solid #e41c28;"></div><div class="t" style="left:1078.75px;top:387.89px;font-size:11px;color:#ae2a38;letter-spacing:0.6px;transform:scaleX(1.12);transform-origin:0 0;">Показывать данные о товаре только на "основном</div><div class="t" style="left:1078.75px;top:405.69px;font-size:11px;color:#ae2a38;letter-spacing:0.6px;transform:scaleX(1.12);transform-origin:0 0;">складе"</div><div class="t" style="left:305px;top:371.04px;font-size:10.7px;font-weight:bold;">По деньгам:</div><div class="t" style="left:647px;top:370.54px;width:400px;text-align:right;font-size:10.7px;letter-spacing:0.27px;">Валюта взаиморасчетов: руб.</div><div class="a" style="left:303px;top:382px;width:749px;height:2px;background:#000;"></div><div class="a" style="left:303px;top:521px;width:749px;height:2px;background:#000;"></div><div class="a" style="left:303px;top:447px;width:749px;height:2px;background:#000;"></div><div class="a" style="left:303px;top:432px;width:749px;height:1px;background:#000;"></div><div class="a" style="left:303px;top:462px;width:749px;height:1px;background:#000;"></div><div class="a" style="left:303px;top:477px;width:749px;height:1px;background:#000;"></div><div class="a" style="left:303px;top:506px;width:749px;height:1px;background:#000;"></div><div class="a" style="left:513px;top:399px;width:222px;height:1px;background:#000;"></div><div class="a" style="left:840px;top:399px;width:210px;height:1px;background:#000;"></div><div class="a" style="left:303px;top:382px;width:2px;height:141px;background:#000;"></div><div class="a" style="left:1050px;top:382px;width:2px;height:141px;background:#000;"></div><div class="a" style="left:513px;top:382px;width:2px;height:141px;background:#000;"></div><div class="a" style="left:735px;top:382px;width:2px;height:141px;background:#000;"></div><div class="a" style="left:840px;top:382px;width:2px;height:141px;background:#000;"></div><div class="a" style="left:630px;top:399px;width:1px;height:122px;background:#000;"></div><div class="a" style="left:945px;top:399px;width:1px;height:122px;background:#000;"></div><div class="t" style="left:209.00px;top:402.19px;width:400px;text-align:center;font-size:12px;font-weight:bold;letter-spacing:0.7px;">Заказы</div><div class="t" style="left:425.00px;top:386.44px;width:400px;text-align:center;font-size:12px;font-weight:bold;letter-spacing:0.7px;">Запланировано</div><div class="t" style="left:372.50px;top:410.94px;width:400px;text-align:center;font-size:12px;font-weight:bold;letter-spacing:0.7px;">Всего</div><div class="t" style="left:483.00px;top:402.94px;width:400px;text-align:center;font-size:12px;font-weight:bold;letter-spacing:0.7px;">Предоплата</div><div class="t" style="left:483.00px;top:419.14px;width:400px;text-align:center;font-size:12px;font-weight:bold;letter-spacing:0.7px;">0,00%</div><div class="t" style="left:588.50px;top:401.94px;width:400px;text-align:center;font-size:12px;font-weight:bold;letter-spacing:0.7px;">Оплачено</div><div class="t" style="left:746.00px;top:385.44px;width:400px;text-align:center;font-size:12px;font-weight:bold;letter-spacing:0.7px;">Оплатить</div><div class="t" style="left:693.50px;top:410.94px;width:400px;text-align:center;font-size:12px;font-weight:bold;letter-spacing:0.7px;">Всего</div><div class="t" style="left:798.00px;top:410.94px;width:400px;text-align:center;font-size:12px;font-weight:bold;letter-spacing:0.7px;">Предоплата</div><div class="t" style="left:209.00px;top:435.04px;width:400px;text-align:center;font-size:10.7px;">1</div><div class="t" style="left:372.50px;top:435.04px;width:400px;text-align:center;font-size:10.7px;">2</div><div class="t" style="left:483.00px;top:435.04px;width:400px;text-align:center;font-size:10.7px;">3</div><div class="t" style="left:588.50px;top:435.04px;width:400px;text-align:center;font-size:10.7px;">5</div><div class="t" style="left:693.50px;top:435.04px;width:400px;text-align:center;font-size:10.7px;">6</div><div class="t" style="left:798.00px;top:435.04px;width:400px;text-align:center;font-size:10.7px;">7</div><div class="t" style="left:306px;top:450.04px;font-size:10.7px;font-weight:bold;">Текущий заказ</div><div class="t" style="left:227px;top:450.04px;width:400px;text-align:right;font-size:10.7px;font-weight:bold;">3 289,15</div><div class="t" style="left:332px;top:450.04px;width:400px;text-align:right;font-size:10.7px;font-weight:bold;">0,00</div><div class="t" style="left:437px;top:450.04px;width:400px;text-align:right;font-size:10.7px;font-weight:bold;">3 289,15</div><div class="t" style="left:542px;top:450.04px;width:400px;text-align:right;font-size:10.7px;font-weight:bold;">0,00</div><div class="t" style="left:647px;top:450.04px;width:400px;text-align:right;font-size:10.7px;font-weight:bold;">0,00</div><div class="t" style="left:306px;top:465.04px;font-size:10.7px;font-weight:bold;">Другие заказы по договору</div><div class="t" style="left:227px;top:465.04px;width:400px;text-align:right;font-size:10.7px;font-weight:bold;">3 289,15</div><div class="t" style="left:332px;top:465.04px;width:400px;text-align:right;font-size:10.7px;font-weight:bold;">0,00</div><div class="t" style="left:437px;top:465.04px;width:400px;text-align:right;font-size:10.7px;font-weight:bold;">3 289,15</div><div class="t" style="left:542px;top:465.04px;width:400px;text-align:right;font-size:10.7px;font-weight:bold;">0,00</div><div class="t" style="left:647px;top:465.04px;width:400px;text-align:right;font-size:10.7px;font-weight:bold;">0,00</div><div class="t" style="left:312.5px;top:480.24px;font-size:10.7px;letter-spacing:0.13px;">Заказ покупателя УТРЭ0000405 от</div><div class="t" style="left:227px;top:480.24px;width:400px;text-align:right;font-size:10.7px;letter-spacing:0.13px;">3 289,15</div><div class="t" style="left:332px;top:480.24px;width:400px;text-align:right;font-size:10.7px;letter-spacing:0.13px;">0,00</div><div class="t" style="left:437px;top:480.24px;width:400px;text-align:right;font-size:10.7px;letter-spacing:0.13px;">3 289,15</div><div class="t" style="left:542px;top:480.24px;width:400px;text-align:right;font-size:10.7px;letter-spacing:0.13px;">0,00</div><div class="t" style="left:647px;top:480.24px;width:400px;text-align:right;font-size:10.7px;letter-spacing:0.13px;">0,00</div><div class="t" style="left:312.5px;top:509.04px;font-size:10.7px;font-weight:bold;">Всего</div><div class="t" style="left:227px;top:509.04px;width:400px;text-align:right;font-size:10.7px;font-weight:bold;">6 578,30</div><div class="t" style="left:332px;top:509.04px;width:400px;text-align:right;font-size:10.7px;font-weight:bold;">0,00</div><div class="t" style="left:437px;top:509.04px;width:400px;text-align:right;font-size:10.7px;font-weight:bold;">6 578,30</div><div class="t" style="left:542px;top:509.04px;width:400px;text-align:right;font-size:10.7px;font-weight:bold;">0,00</div><div class="t" style="left:647px;top:509.04px;width:400px;text-align:right;font-size:10.7px;font-weight:bold;">0,00</div><div class="t" style="left:312.5px;top:493.54px;font-size:10.7px;letter-spacing:0.13px;">18.07.2014 10:42:00</div><div class="a" style="left:271px;top:465px;width:11px;height:11px;background:#fdfbf3;border:1px solid #b9b196;"></div><div class="a" style="left:273px;top:470px;width:7px;height:1px;background:#4a4a4a;"></div><div class="a" style="left:276px;top:476px;width:1px;height:31px;background:#b9b196;"></div><div class="a" style="left:276px;top:506px;width:6px;height:1px;background:#b9b196;"></div>

<!-- WINDOW BAR / STATUS / TASKBAR -->
<div class="a" style="left:0px;top:812px;width:1600px;height:24px;background:#eee7de;"></div><div class="a" style="left:1px;top:814px;width:172px;height:20px;background:#b3b1b3;border:1px solid #c8c4bc;"></div><svg class="a" style="left:4px;top:818px;" width="13" height="12" viewBox="0 0 13 12"><rect x="0.5" y="0.5" width="12" height="11" fill="#f6f6f6" stroke="#8a8aa0"/><rect x="1" y="1" width="11" height="2" fill="#d8d0a0"/><path d="M4.5 1v10M8.5 1v10" stroke="#9a9ab0"/></svg><div class="t" style="left:20px;top:818.79px;font-size:11px;color:#1a1a1a;letter-spacing:0.12px;">Номенклатура</div><div class="a" style="left:174px;top:814px;width:172px;height:20px;background:#b3b1b3;border:1px solid #c8c4bc;"></div><svg class="a" style="left:177px;top:818px;" width="12" height="14" viewBox="0 0 12 14"><rect x="0.5" y="0.5" width="11" height="13" fill="#fafafa" stroke="#8aa0c0"/><path d="M2.5 4h7M2.5 6h7M2.5 8h7M2.5 10h7" stroke="#b8c8dc" stroke-width="0.8"/></svg><div class="t" style="left:193px;top:818.79px;font-size:11px;color:#1a1a1a;letter-spacing:0.12px;">Заказы покупателей: 2014 г.</div><div class="a" style="left:347px;top:814px;width:172px;height:20px;background:#b3b1b3;border:1px solid #c8c4bc;"></div><svg class="a" style="left:350px;top:818px;" width="12" height="14" viewBox="0 0 12 14"><rect x="0.5" y="0.5" width="11" height="13" fill="#fafafa" stroke="#8aa0c0"/><path d="M2.5 4h7M2.5 6h7M2.5 8h7M2.5 10h7" stroke="#b8c8dc" stroke-width="0.8"/></svg><div class="t" style="left:366px;top:818.79px;font-size:11px;color:#1a1a1a;letter-spacing:0.12px;">Заказ покупателя: Проведен</div><div class="a" style="left:520px;top:814px;width:172px;height:20px;background:#bcd2ea;border:1px solid #a8b8c8;"></div><svg class="a" style="left:523px;top:818px;" width="12" height="14" viewBox="0 0 12 14"><rect x="0.5" y="0.5" width="11" height="13" fill="#fdfdfd" stroke="#8aa0c0"/><rect x="2.5" y="4" width="1.5" height="7" fill="#e04020"/><rect x="5" y="6" width="1.5" height="5" fill="#f0a020"/><rect x="7.5" y="7" width="1.5" height="4" fill="#30a030"/></svg><div class="t" style="left:539px;top:818.79px;font-size:11px;color:#1a1a1a;letter-spacing:0.12px;">Анализ заказа покупателя</div><div class="a" style="left:0px;top:835px;width:1600px;height:22px;background:#eee7de;"></div><div class="a" style="left:0px;top:836px;width:1527px;height:19px;background:#efe8df;border:1px solid #d8d0c2;"></div><div class="t" style="left:5px;top:841.29px;font-size:11px;color:#2a2010;">Для получения подсказки нажмите F1</div><div class="a" style="left:1532px;top:836px;width:29px;height:19px;background:#efe8df;border:1px solid #d8d0c2;"></div><div class="t" style="left:1537px;top:841.29px;font-size:11px;color:#a09070;">CAP</div><div class="a" style="left:1566px;top:836px;width:34px;height:19px;background:#efe8df;border:1px solid #d8d0c2;"></div><div class="t" style="left:1570px;top:841.29px;font-size:11px;color:#2a2010;">NUM</div><div class="a" style="left:0px;top:857px;width:1600px;height:43px;background:#d6d3cd;border-top:1px solid #fff;"></div><div class="a" style="left:2px;top:860px;width:51px;height:38px;background:#d6d3cd;border:1px solid;border-color:#fff #404040 #404040 #fff;box-shadow:inset -1px -1px 0 #808080;"></div><svg class="a" style="left:4px;top:869px;" width="17" height="17" viewBox="0 0 17 17"><path d="M1 4c2-2 4-2 7 0l-1 5c-2-1.5-4-1.5-6 0z" fill="#f25a22"/><path d="M8.5 4.2c2.5 1.5 5 1.5 7-0.2l-1 5c-2 1.5-4 1.5-7 0z" fill="#7fba00"/><path d="M0.2 9.8c2-1.5 4-1.5 6.3 0l-1 5.2c-2-1.5-4-1.5-6.3 0z" fill="#00a4ef"/><path d="M7.2 10.2c2.5 1.5 5 1.5 7 0l-1 5c-2 1.5-4 1.5-7 0z" fill="#ffb900"/></svg><div class="t" style="left:20px;top:874.44px;font-size:12px;font-weight:bold;color:#000;">Пуск</div><div class="a" style="left:60px;top:862px;width:1px;height:34px;background:#fff;"></div><div class="a" style="left:61px;top:862px;width:1px;height:34px;background:#808080;"></div><svg class="a" style="left:82px;top:862px;" width="30" height="30" viewBox="0 0 30 30"><rect x="2" y="0" width="10" height="22" fill="#8a9098"/><rect x="3" y="1" width="4" height="20" fill="#c8ccd0"/><path d="M6 4h5M6 7h5M6 10h5" stroke="#5a6068"/><rect x="8" y="14" width="20" height="14" rx="2" fill="#9aa2aa" stroke="#5a6068"/><path d="M13 14v-3h10v3" stroke="#5a6068" stroke-width="1.5" fill="none"/><rect x="10" y="19" width="16" height="2" fill="#6a7078"/></svg><svg class="a" style="left:131px;top:868px;" width="28" height="23" viewBox="0 0 28 23"><path d="M5 1h22l-5 21H0z" fill="#2a6ab8"/><path d="M6 2h20l-1 4H5z" fill="#5a9ad8"/><path d="M7 7l7 5-8 5" stroke="#fff" stroke-width="2.5" fill="none"/><path d="M13 18h6" stroke="#fff" stroke-width="2"/></svg><svg class="a" style="left:178px;top:865px;" width="33" height="30" viewBox="0 0 33 30"><path d="M1 5h11l2 2h18v22H1z" fill="#e8c860"/><rect x="3" y="3" width="4" height="3" fill="#30a040"/><rect x="10" y="4" width="4" height="3" fill="#e04020"/><rect x="17" y="5" width="4" height="3" fill="#3080c0"/><path d="M1 11h31v18H1z" fill="#f6e4a0"/><path d="M8 29v-9h17v9" stroke="#5aa8e0" stroke-width="4" fill="none"/></svg><div class="a" style="left:221px;top:860px;width:47px;height:37px;background:#fff;border:1px solid;border-color:#404040 #fff #fff #404040;box-shadow:inset 1px 1px 0 #808080;"></div><svg class="a" style="left:230px;top:864px;" width="30" height="30" viewBox="0 0 30 30"><defs><linearGradient id="g1c" x1="0" y1="0" x2="0" y2="1"><stop offset="0" stop-color="#fdf2b0"/><stop offset="0.5" stop-color="#f5cf3a"/><stop offset="1" stop-color="#f6dc90"/></linearGradient></defs><circle cx="15" cy="15" r="14" fill="url(#g1c)" stroke="#e0c070" stroke-width="0.8"/><path d="M4 11l5-2h2v11H8v-8l-4 1z" fill="#e8280a"/><path d="M8.8 10.5v9" stroke="#ff8a30" stroke-width="0.7"/><path d="M21 12a4.2 3.6 0 1 0 -3 6.5H28" stroke="#e8280a" stroke-width="3.2" fill="none"/><path d="M21 12a4.2 3.6 0 1 0 -3 6.5H28" stroke="#ff9040" stroke-width="0.7" fill="none"/></svg><div class="a" style="left:1381px;top:862px;width:1px;height:34px;background:#fff;"></div><div class="a" style="left:1382px;top:862px;width:1px;height:34px;background:#808080;"></div><div class="t" style="left:1392px;top:871.94px;font-size:12px;color:#000;">RU</div><div class="a" style="left:1412px;top:866px;width:1px;height:26px;background:#fff;"></div><div class="a" style="left:1413px;top:866px;width:1px;height:26px;background:#808080;"></div><div class="a" style="left:1416px;top:860px;width:182px;height:38px;border:1px solid;border-color:#808080 #fff #fff #808080;"></div><svg class="a" style="left:1421px;top:872px;" width="7" height="10" viewBox="0 0 7 10"><path d="M0.5 4.5l3-3 3 3M0.5 8.5l3-3 3 3" stroke="#000" stroke-width="1.5" fill="none"/></svg><svg class="a" style="left:1439px;top:871px;" width="16" height="17" viewBox="0 0 16 17"><path d="M1 0v16" stroke="#a0a0a0" stroke-width="1.5"/><path d="M2 1c3-1 5 2 8 1l5 1-2 4c-3 0-5 1-11 0z" fill="#f0f0f0" stroke="#909090"/></svg><svg class="a" style="left:1463px;top:871px;" width="16" height="17" viewBox="0 0 16 17"><rect x="3" y="3" width="12" height="10" fill="#b8b8b8" stroke="#808080"/><rect x="5" y="5" width="8" height="6" fill="#d8d8d8"/><path d="M2 0v10M4 0v4" stroke="#606060"/><rect x="6" y="13" width="6" height="3" fill="#a0a0a0"/></svg><svg class="a" style="left:1487px;top:872px;" width="16" height="16" viewBox="0 0 16 16"><path d="M1 5h3l4-4v14l-4-4H1z" fill="#e8e8e8" stroke="#909090"/><circle cx="11" cy="11" r="4" fill="#e02a2a"/><path d="M9 9l4 4M13 9l-4 4" stroke="#fff" stroke-width="1.3"/></svg><div class="t" style="left:1344.60px;top:866.79px;width:400px;text-align:center;font-size:11px;color:#000;">8:48</div><div class="t" style="left:1344.60px;top:882.59px;width:400px;text-align:center;font-size:11px;color:#000;">08.08.2014</div><svg class="a" style="left:1581px;top:874px;" width="16" height="13" viewBox="0 0 16 13"><rect x="0" y="0" width="15" height="12" fill="#3a7ad0"/><rect x="1" y="1" width="13" height="8" fill="#5aa0e8"/><rect x="0" y="10" width="15" height="2" fill="#203050"/></svg>
</div></body></html>
